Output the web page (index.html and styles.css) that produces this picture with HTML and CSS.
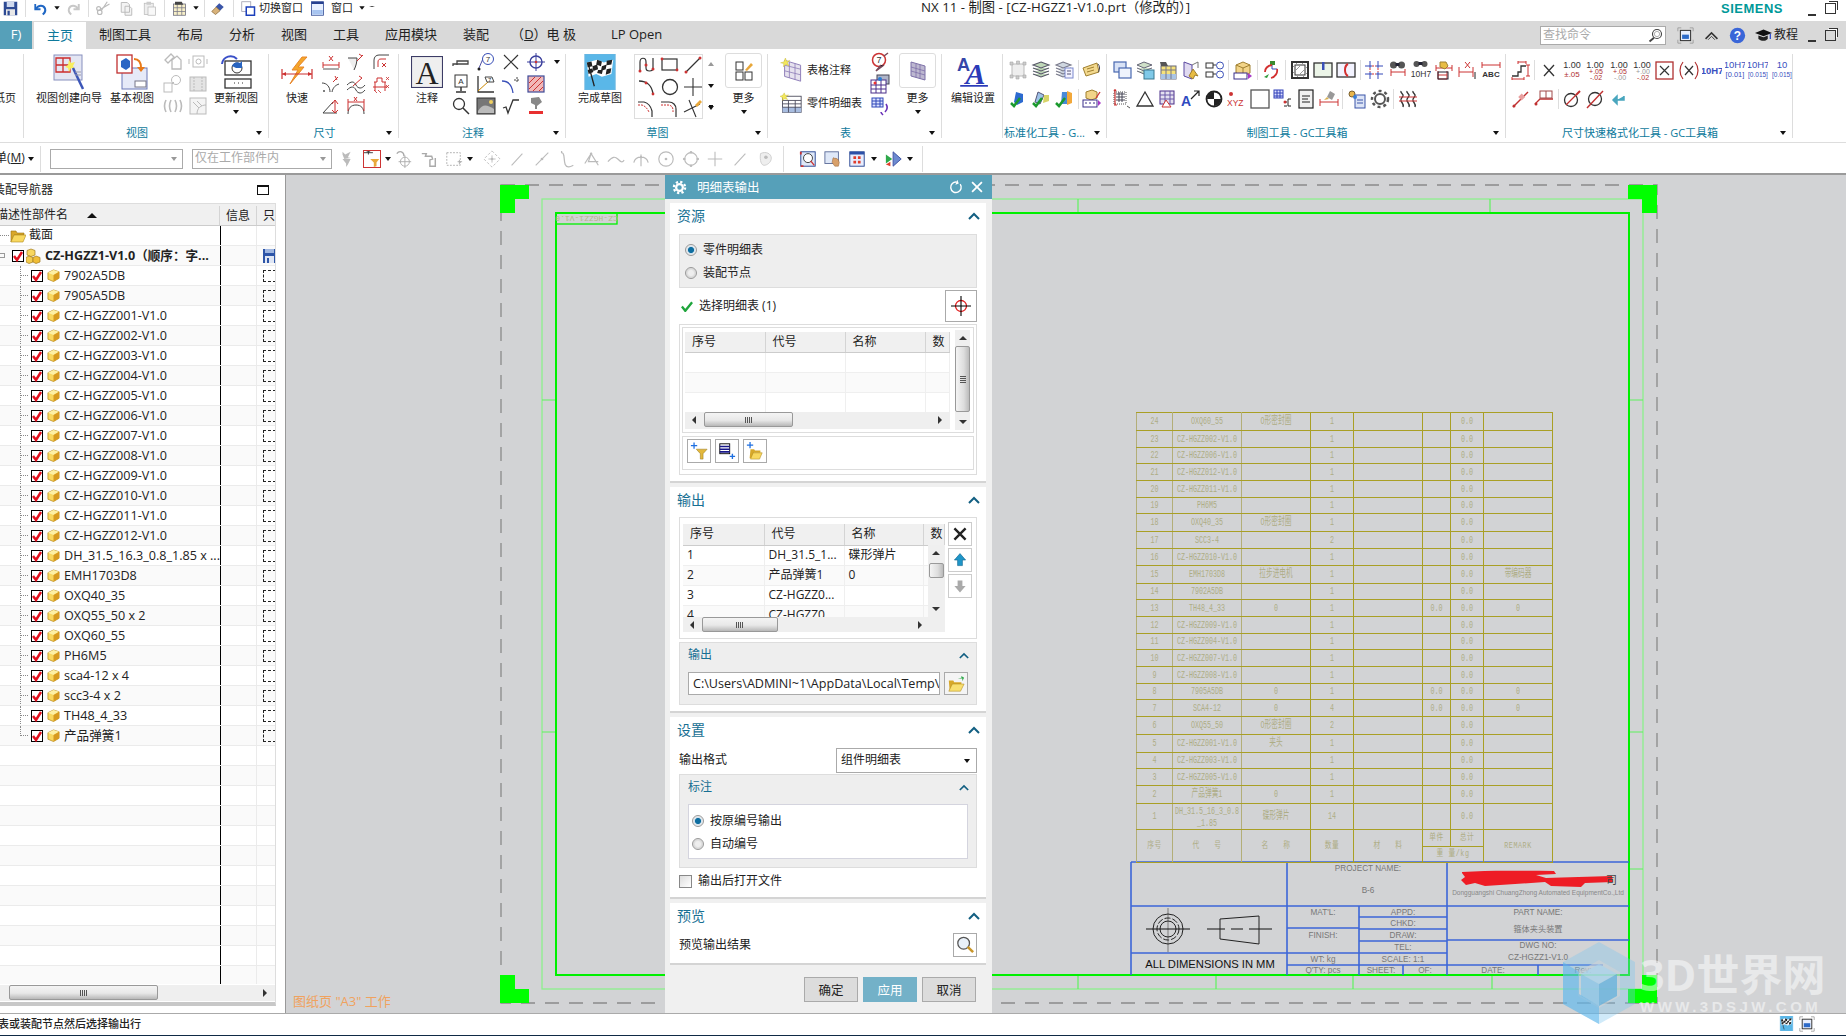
FILE: index.html
```html
<!DOCTYPE html>
<html lang="zh-CN">
<head>
<meta charset="utf-8">
<title>NX 11 - 制图</title>
<link rel="stylesheet" href="styles.css">
</head>
<body>
<svg class="defs" xmlns="http://www.w3.org/2000/svg">
<defs>
<symbol id="save" viewBox="0 0 20 20"><rect x="1" y="1" width="18" height="18" fill="#2d4a94"/><rect x="5" y="1" width="10" height="7" fill="#cfd9ee"/><rect x="4" y="11" width="12" height="8" fill="#e8e8e8"/><rect x="6" y="13" width="3" height="6" fill="#2d4a94"/></symbol>
<symbol id="undo" viewBox="0 0 20 20"><path d="M3 4v7h7" fill="none" stroke="#2067c4" stroke-width="2.4"/><path d="M3.5 11c4-6 10-6 12.500-1 1 3-.5 6-3 8" fill="none" stroke="#2067c4" stroke-width="2.8"/></symbol>
<symbol id="redo" viewBox="0 0 20 20"><path d="M17 4v7h-7M16.500 11c-4-6-10-6-12.500-1-1 3 .5 6 3 8" fill="none" stroke="#c8c8c8" stroke-width="2.600"/></symbol>
<symbol id="scis" viewBox="0 0 20 20"><path d="M15 1 7 13M18 4 6 11" stroke="#bbb" stroke-width="1.600"/><circle cx="5" cy="15" r="3" fill="none" stroke="#bbb" stroke-width="1.600"/><circle cx="3.500" cy="10" r="2.600" fill="none" stroke="#bbb" stroke-width="1.600"/></symbol>
<symbol id="copy" viewBox="0 0 20 20"><path d="M3 2h8l3 3v10H3z M8 7h6l3 3v9H8z" fill="#f3f3f3" stroke="#bbb" stroke-width="1.300"/></symbol>
<symbol id="paste" viewBox="0 0 20 20"><rect x="3" y="3" width="12" height="15" fill="#eee" stroke="#bbb"/><rect x="6" y="1" width="6" height="4" fill="#ccc"/><rect x="8" y="8" width="10" height="11" fill="#f8f8f8" stroke="#bbb"/></symbol>
<symbol id="qtbl" viewBox="0 0 20 20"><rect x="2" y="4" width="16" height="15" fill="#f7efc8" stroke="#667"/><path d="M2 9h16M2 14h16M7 4v15M13 4v15" stroke="#778"/><path d="M4 1h9l2 4H4z" fill="#444"/></symbol>
<symbol id="brush" viewBox="0 0 20 20"><path d="M11 3l6 5-5 5-6-5z" fill="#3a55a8"/><path d="M7 8 1 14l5 4 6-5z" fill="#d8b27a" stroke="#8a6a3a"/></symbol>
<symbol id="win1" viewBox="0 0 20 20"><rect x="1" y="1" width="12" height="13" fill="#fff" stroke="#99a"/><rect x="7" y="8" width="11" height="11" fill="#fff" stroke="#1b3fbb" stroke-width="2"/></symbol>
<symbol id="win2" viewBox="0 0 20 20"><rect x="2" y="1" width="16" height="18" fill="#e8f0ff" stroke="#26408f"/><rect x="2" y="1" width="16" height="3" fill="#26408f"/><rect x="3" y="12" width="14" height="6" fill="#a7c4f0"/></symbol>
<symbol id="wiz" viewBox="0 0 32 36"><rect x="1" y="1" width="28" height="25" fill="#e4e6f3" stroke="#8790be"/><path d="M3 4h14v14H3zM3 11h14M10 4v14" fill="none" stroke="#cb2d2d" stroke-width="1.300"/><path d="M16 6l2 3 4-1-2 4 2 3-4-1-2 4-1-4-3-1 3-2z" fill="#f7ee60"/><path d="M20 14l10 21" stroke="#3c56b8" stroke-width="2.500"/><path d="M22 18h6M22 21h6" stroke="#99a" fill="none"/></symbol>
<symbol id="base" viewBox="0 0 32 36"><rect x="6" y="14" width="25" height="21" fill="#e6eaf8" stroke="#6b78b8"/><rect x="19" y="27" width="11" height="6" fill="#fff" stroke="#778"/><rect x="1" y="1" width="15" height="18" fill="#fff" stroke="#c03030" stroke-width="1.300"/><path d="M5 7l5-3 4 3v6l-4 3-5-3z" fill="#2b66c4"/><path d="M18 5c5 0 7 3 7 9" fill="none" stroke="#e97a18" stroke-width="2"/><path d="M21 13h8l-4 5z" fill="#e97a18"/></symbol>
<symbol id="updv" viewBox="0 0 32 36"><rect x="5" y="7" width="26" height="14" fill="#fff" stroke="#333" stroke-width="1.300"/><rect x="5" y="25" width="26" height="9" fill="#fff" stroke="#333" stroke-width="1.300"/><path d="M14 29h1M18 29h1M22 29h1" stroke="#333"/><circle cx="17" cy="14" r="5" fill="none" stroke="#333"/><path d="M2 10c1-8 10-10 15-5" fill="none" stroke="#3a50c8" stroke-width="2"/><path d="M12 12c1-3 5-5 8-3l2-2v7h-6z" fill="#2864c0"/></symbol>
<symbol id="g1" viewBox="0 0 20 20"><path d="M2 8l6-6 3 3-6 6zM9 8l5-4 4 4v9H9z" fill="none" stroke="#bbb" stroke-width="1.300"/></symbol>
<symbol id="g2" viewBox="0 0 20 20"><rect x="5" y="4" width="11" height="11" fill="none" stroke="#bbb"/><path d="M1 7v5M19 7v5" stroke="#bbb"/><circle cx="10.500" cy="9.500" r="2.500" fill="none" stroke="#bbb"/></symbol>
<symbol id="g3" viewBox="0 0 20 20"><rect x="1" y="9" width="8" height="9" fill="none" stroke="#bbb"/><circle cx="13" cy="6" r="4.500" fill="none" stroke="#bbb"/><path d="M9 10l2-2" stroke="#bbb"/></symbol>
<symbol id="g4" viewBox="0 0 20 20"><rect x="2" y="3" width="16" height="14" fill="#e4e4e4" stroke="#bbb"/><path d="M6 3v14M14 3v14" stroke="#bbb" stroke-dasharray="2 1"/></symbol>
<symbol id="g5" viewBox="0 0 20 20"><path d="M3 4c-2 4-2 8 0 12M8 4c-2 4-2 8 0 12M12 4c2 4 2 8 0 12M17 4c2 4 2 8 0 12" fill="none" stroke="#bbb" stroke-width="1.600"/></symbol>
<symbol id="g6" viewBox="0 0 20 20"><rect x="2" y="2" width="16" height="16" fill="#f4f4f4" stroke="#bbb"/><path d="M9 18c0-6 4-9 9-9M5 6l6 6M9 5l5 5" fill="none" stroke="#bbb"/></symbol>
<symbol id="fast" viewBox="0 0 32 32"><path d="M21 1 11 14h6L9 28l14-17h-6l9-10z" fill="#f4a62a" stroke="#e8862a"/><path d="M1 18h30M1 13v10M31 13v10" stroke="#cc3030" stroke-width="1.200"/><path d="M1 18l4-2v4zM31 18l-4-2v4z" fill="#cc3030"/></symbol>
<symbol id="d1" viewBox="0 0 20 20"><path d="M2 13h16M2 10v6M18 10v6" stroke="#cc3030"/><path d="M2 17h16" stroke="#555"/><path d="M8 4l4 5M12 4 8 9" stroke="#cc3030"/></symbol>
<symbol id="d2" viewBox="0 0 20 20"><path d="M2 6h9c0 4-1 8-3 12" fill="#eee" stroke="#444"/><path d="M11 9l6-6M13 2l3 2" stroke="#cc3030"/></symbol>
<symbol id="d3" viewBox="0 0 20 20"><path d="M3 17V8c0-3 2-5 5-5h10" fill="none" stroke="#444"/><path d="M7 15V10c0-2 1-3 3-3h5" fill="none" stroke="#cc3030"/><path d="M11 11l4 4M15 11l-4 4" stroke="#cc3030"/></symbol>
<symbol id="d4" viewBox="0 0 20 20"><path d="M1 9c5 0 8 4 8 9M18 10c-3 1-6 3-7 8" fill="none" stroke="#444"/><path d="M12 8l5-5M14 2l2 4" stroke="#cc3030"/><path d="M2 17h2M3 16v2" stroke="#555"/></symbol>
<symbol id="d5" viewBox="0 0 20 20"><path d="M1 11c4-4 7-4 9 0s6 4 9 0M1 16c4-4 7-4 9 0s6 4 9 0" fill="none" stroke="#444"/><path d="M7 12 16 4M13 2l3 2" stroke="#cc3030"/></symbol>
<symbol id="d6" viewBox="0 0 20 20"><path d="M3 8h3V4h5v4h4M4 8v9M14 8v9M2 13h14" fill="none" stroke="#cc3030"/><path d="M15 3l3 3M18 3l-3 3M15 11l3 3M18 11l-3 3M3 16l3 3M7 16l3 3" stroke="#cc3030" stroke-width=".8"/></symbol>
<symbol id="d7" viewBox="0 0 20 20"><path d="M12 6 2 17h14" fill="none" stroke="#444"/><path d="M14 4v13M11 14l3 3 3-3M11 8l3-4 3 4" fill="none" stroke="#cc3030"/></symbol>
<symbol id="d8" viewBox="0 0 20 20"><path d="M2 18c0-6 3-9 8-9s8 3 8 9" fill="none" stroke="#444"/><path d="M2 6h16M2 3v12M18 3v12" stroke="#cc3030"/><path d="M8 1l3 4M11 1 8 5" stroke="#cc3030"/></symbol>
<symbol id="bigA" viewBox="0 0 30 30"><rect x=".5" y=".5" width="29" height="29" fill="#efefef" stroke="#3c3c66"/><text x="15" y="26" text-anchor="middle" class="serif" font-size="30" fill="#222">A</text></symbol>
<symbol id="n1" viewBox="0 0 20 20"><path d="M2 14v-2h15v-3H6v4" fill="none" stroke="#444" stroke-width="1.300"/></symbol>
<symbol id="n2" viewBox="0 0 20 20"><path d="M9 2 3 16" stroke="#5050a0"/><circle cx="12" cy="7" r="5.500" fill="#fff" stroke="#3a50b8"/><text x="12" y="10" text-anchor="middle" font-size="8" class="sans" fill="#333">7</text><circle cx="3" cy="17" r="1.500" fill="#222"/></symbol>
<symbol id="n3" viewBox="0 0 20 20"><path d="M3 3l14 14M17 3 3 17" stroke="#333" stroke-width="1.200"/></symbol>
<symbol id="n4" viewBox="0 0 20 20"><circle cx="10" cy="10" r="6" fill="none" stroke="#3a3f9c" stroke-width="1.400"/><path d="M10 1v18M1 10h18" stroke="#3a3f9c"/><circle cx="10" cy="10" r="1.300" fill="#c33"/></symbol>
<symbol id="n5" viewBox="0 0 20 20"><rect x="4" y="1" width="12" height="12" fill="#fff" stroke="#333"/><text x="10" y="10" text-anchor="middle" font-size="8" class="sans" fill="#333">A</text><path d="M10 13v4M5 18h10" stroke="#333" stroke-width="1.500"/></symbol>
<symbol id="n6" viewBox="0 0 20 20"><path d="M2 2v16h16" fill="none" stroke="#333" stroke-width="1.300"/><path d="M2 17 13 7" stroke="#cc8800"/><path d="M9 3h7l2 5H11z" fill="#fff" stroke="#444"/><text x="12" y="8" font-size="6" class="sans" fill="#333">7</text></symbol>
<symbol id="n7" viewBox="0 0 20 20"><path d="M1 7c6 0 10 4 11 12" fill="none" stroke="#3a50b8" stroke-width="1.300"/><path d="M13 6h6M16 3v6" stroke="#444" stroke-dasharray="2 1"/></symbol>
<symbol id="n8" viewBox="0 0 20 20"><rect x="2" y="2" width="16" height="16" fill="#f1b8b8" stroke="#3c4a98" stroke-width="1.200"/><path d="M3 9l6-6M3 15 15 3M7 17 17 7M13 17l4-4" stroke="#c33"/></symbol>
<symbol id="n9" viewBox="0 0 20 20"><circle cx="8" cy="8" r="5.500" fill="#fff" stroke="#333" stroke-width="1.300"/><path d="M12 12l6 6" stroke="#333" stroke-width="1.500"/></symbol>
<symbol id="n10" viewBox="0 0 20 20"><rect x="1" y="2" width="18" height="16" fill="#777" stroke="#333"/><path d="M2 15c5-8 9-6 16-2v4H2z" fill="#bbb"/><circle cx="15" cy="6" r="2" fill="#f0d060"/></symbol>
<symbol id="n11" viewBox="0 0 20 20"><path d="M2 12l3-1 2 6 5-13h6" fill="none" stroke="#333" stroke-width="1.300"/></symbol>
<symbol id="n12" viewBox="0 0 20 20"><path d="M3 18h14v-3H3z" fill="#e83030"/><path d="M10 13V8" stroke="#888" stroke-width="2"/><path d="M5 2l8-1 3 5-5 4-6-3z" fill="#888"/></symbol>
<symbol id="flag" viewBox="0 0 32 38"><rect width="32" height="38" fill="#5ab7e8"/><path d="M0 0h32v38H0z" fill="none" stroke="#6db6e0"/><path d="M2 9l11-3 7 3 10-3 -2 15-10 3-6-3-8 3z" fill="#fff"/><path d="M2 9l5-1 1 5-5 1zM13 6l5 2-1 5-5-2zM8 13l5-2 1 5-5 2zM18 13l5-2-1 5-5 2zM23 7l6-1-1 5-5 1zM3 17l5-2 1 4-5 2zM14 17l5 0-1 4-5-1zM23 16l5-1-1 5-5 2z" fill="#222"/><path d="M4 12l6 22" stroke="#222" stroke-width="1.400"/></symbol>
<symbol id="s1" viewBox="0 0 20 20"><path d="M3 17V7c0-5 6-5 6 0v6c0 4 7 4 7 0V3" fill="none" stroke="#333" stroke-width="1.200"/><circle cx="3" cy="16" r="1.500" fill="#c33"/><circle cx="16" cy="14" r="1.500" fill="#c33"/><circle cx="9" cy="10" r="1.500" fill="#c33"/></symbol>
<symbol id="s2" viewBox="0 0 20 20"><rect x="2" y="4" width="15" height="11" fill="none" stroke="#333" stroke-width="1.200"/><circle cx="2" cy="4" r="1.400" fill="#c33"/><circle cx="17" cy="15" r="1.400" fill="#c33"/></symbol>
<symbol id="s3" viewBox="0 0 20 20"><path d="M3 17 17 3" stroke="#333" stroke-width="1.200"/><circle cx="3" cy="17" r="1.500" fill="#c33"/><circle cx="17" cy="3" r="1.500" fill="#c33"/></symbol>
<symbol id="s4" viewBox="0 0 20 20"><path d="M2 4c8 0 13 5 14 13" fill="none" stroke="#333" stroke-width="1.300"/><circle cx="9" cy="6" r="1.400" fill="#c33"/><circle cx="16" cy="17" r="1.400" fill="#c33"/></symbol>
<symbol id="s5" viewBox="0 0 20 20"><circle cx="10" cy="10" r="7.500" fill="none" stroke="#333" stroke-width="1.300"/></symbol>
<symbol id="s6" viewBox="0 0 20 20"><path d="M10 1v18M1 10h18" stroke="#333" stroke-width="1.100"/></symbol>
<symbol id="s7" viewBox="0 0 20 20"><path d="M1 4h6c4 1 7 5 8 9v6" fill="none" stroke="#333" stroke-width="1.200"/><path d="M1 7h4c3 1 5 3 7 7" fill="none" stroke="#c33" stroke-dasharray="2 1"/></symbol>
<symbol id="s8" viewBox="0 0 20 20"><path d="M1 4h8c4 0 7 3 7 7v8" fill="none" stroke="#333" stroke-width="1.200"/><path d="M1 7h7c3 0 5 2 5 5v2" fill="none" stroke="#c33" stroke-dasharray="2 1"/></symbol>
<symbol id="s9" viewBox="0 0 20 20"><path d="M6 2l7 17M1 14 17 6" stroke="#333" stroke-width="1.100"/><path d="M12 7l5-5 2 2-5 5z" fill="#e8a73a"/></symbol>
<symbol id="mo1" viewBox="0 0 20 20"><rect x="2" y="1" width="7" height="8" fill="#fff" stroke="#333"/><rect x="2" y="11" width="7" height="8" fill="#fff" stroke="#333"/><rect x="11" y="11" width="7" height="8" fill="#fff" stroke="#333"/><path d="M11 9l6-7 2 2-6 6z" fill="#e8a73a"/></symbol>
<symbol id="tb1" viewBox="0 0 26 30"><path d="M5 3l20 6v20L5 23z" fill="#e6e2ee" stroke="#8d7cb8" stroke-width="1.200"/><path d="M5 9l20 5M5 16l20 5M11 5v20M18 7v20" stroke="#8d7cb8"/><path d="M6 0l1.500 4 4-1-3 3 2 4-4-2-3 3 .5-4L0 6l4-1z" fill="#f3e85c" stroke="#c0b030" stroke-width=".5"/></symbol>
<symbol id="tb2" viewBox="0 0 26 24"><rect x="3" y="4" width="22" height="19" fill="#fff" stroke="#445"/><rect x="3" y="17" width="22" height="6" fill="#a8bde0"/><path d="M3 9h22M3 13h22M3 17h22M10 9v14M18 9v14" stroke="#445"/><path d="M5 0l1.500 3 3.500-.5L7 5l2 3-3.500-1L3 9l-.3-3.500L0 4l3-1z" fill="#f3e85c" stroke="#c0b030" stroke-width=".4"/></symbol>
<symbol id="tb3" viewBox="0 0 20 20"><circle cx="9" cy="8" r="6.500" fill="#fff" stroke="#c33" stroke-width="1.500"/><text x="9" y="11" text-anchor="middle" font-size="9" class="sans" fill="#333">7</text><path d="M11 13 6 19l8-6M14 4l4-3" stroke="#7a4a5a" stroke-width="1.500"/></symbol>
<symbol id="tb4" viewBox="0 0 20 20"><rect x="7" y="1" width="12" height="9" fill="#aeb4c8" stroke="#445"/><rect x="1" y="6" width="15" height="13" fill="#fff" stroke="#4a2f8a"/><path d="M1 11h15M1 15h15M6 6v13M11 6v13" stroke="#4a2f8a"/><circle cx="5" cy="9" r="1.500" fill="#e33"/><circle cx="10" cy="5" r="2" fill="#2b7bd0"/></symbol>
<symbol id="tb5" viewBox="0 0 20 20"><rect x="2" y="2" width="11" height="9" fill="#dde4ff" stroke="#3048b8"/><path d="M2 5h11M2 8h11M6 2v9M10 2v9" stroke="#3048b8"/><path d="M16 8c2 3 1 6-1 8M13 19c-1-1-2-2-2-3" fill="none" stroke="#6a32b8" stroke-width="1.600"/></symbol>
<symbol id="tb6" viewBox="0 0 20 20"><path d="M3 1l14 4v14L3 15z" fill="#bdb8d0" stroke="#7d70a8"/><path d="M3 6l14 4M3 10l14 4M8 3v13M12 4v14" stroke="#7d70a8" stroke-width=".8"/></symbol>
<symbol id="edit" viewBox="0 0 30 30"><text x="0" y="14" class="sans" font-size="17" font-weight="700" fill="#3546a8">A</text><text x="8" y="26" class="serif" font-size="28" font-weight="700" font-style="italic" fill="#2b3ab8">A</text><path d="M3 28h26" stroke="#2b3ab8" stroke-width="1.600"/></symbol>
<symbol id="u1" viewBox="0 0 20 20"><rect x="4" y="4" width="12" height="12" fill="#eee" stroke="#bbb"/><path d="M2 2h3v3H2zM15 2h3v3h-3zM2 15h3v3H2zM15 15h3v3h-3zM8.500 1h3v3h-3zM8 16h3v3H8z" fill="#ccc" stroke="#aaa" stroke-width=".6"/></symbol>
<symbol id="u2" viewBox="0 0 20 20"><path d="M10 2l8 3-8 3-8-3zM2 8l8 3 8-3M2 11l8 3 8-3M2 14l8 3 8-3" fill="#bfd7b8" stroke="#556" stroke-width="1.100"/></symbol>
<symbol id="u3" viewBox="0 0 20 20"><path d="M9 2l8 3-8 3-7-3zM2 8l7 3 8-3M2 11l7 3 8-3M2 14l7 3 8-3" fill="#cfd7e0" stroke="#778" stroke-width="1.100"/><rect x="11" y="8" width="8" height="10" fill="#f2f2ff" stroke="#7a88cc"/><path d="M13 11h4M13 14h4" stroke="#557"/></symbol>
<symbol id="u4" viewBox="0 0 20 20"><path d="M1 8l14-5 2 9-13 4z" fill="#f3d98e" stroke="#a08030"/><path d="M5 9l7-2M5 12l7-2" stroke="#a08030"/><path d="M16 4c2 2 2 6 0 8" fill="none" stroke="#445"/></symbol>
<symbol id="u5" viewBox="0 0 20 20"><path d="M8 3l7 2v8l-6 3-3-3z" fill="#2d6ad0"/><path d="M3 14l3 3 6-8" fill="none" stroke="#1c9a2f" stroke-width="2.500"/></symbol>
<symbol id="u6" viewBox="0 0 20 20"><path d="M7 3l6 3-4 9-5-2z" fill="#9ec2e8" stroke="#557"/><path d="M13 6h5v6l-6 2z" fill="#d8d468"/><path d="M2 14l3 3 6-8" fill="none" stroke="#1c9a2f" stroke-width="2.500"/></symbol>
<symbol id="u7" viewBox="0 0 20 20"><path d="M8 3h5v12H7z" fill="#4a8ad8"/><path d="M13 2l5 2v10l-5 2z" fill="#f2a83a"/><path d="M2 14l3 3 6-8" fill="none" stroke="#1c9a2f" stroke-width="2.500"/></symbol>
<symbol id="u8" viewBox="0 0 20 20"><path d="M4 3l6-2 5 2v6l-6 2-5-2z" fill="#f2d488" stroke="#a08030"/><rect x="1" y="11" width="14" height="7" fill="#fff" stroke="#3a2f8a"/><path d="M3 14h2M7 14h2M11 14h2" stroke="#3a2f8a"/><path d="M16 11l3 3-3 3z" fill="#a838c8"/><path d="M14 9l4-6" stroke="#c33" stroke-width="1.300"/></symbol>
<symbol id="t1" viewBox="0 0 20 20"><rect x="2" y="2" width="12" height="10" fill="#d8e2f6" stroke="#4868b0" stroke-width="1.200"/><rect x="7" y="8" width="12" height="10" fill="#eef3fc" stroke="#4868b0" stroke-width="1.200"/></symbol>
<symbol id="t2" viewBox="0 0 20 20"><path d="M9 2l8 3-8 3-7-3zM2 8l7 3 8-3M2 11l7 3 8-3" fill="#cfe0c8" stroke="#667"/><rect x="9" y="10" width="10" height="9" fill="#7fc9e8" stroke="#3a7890"/></symbol>
<symbol id="t3" viewBox="0 0 20 20"><rect x="3" y="6" width="15" height="13" fill="#f6e27a" stroke="#667"/><rect x="3" y="14" width="15" height="5" fill="#aac4e4"/><path d="M3 10h15M8 6v13M13 6v13" stroke="#778"/><path d="M2 2h6l2 4H3z" fill="#555"/></symbol>
<symbol id="t4" viewBox="0 0 20 20"><path d="M3 2l8 3v14l-8-3z" fill="#e0daf0" stroke="#5a48a0"/><path d="M11 5l6-3v6" fill="none" stroke="#777"/><path d="M8 16l4-7 5 7-3-1-2 4z" fill="#e8bc44" stroke="#a08030"/></symbol>
<symbol id="t5" viewBox="0 0 20 20"><rect x="1" y="3" width="7" height="5" fill="none" stroke="#333"/><rect x="1" y="12" width="7" height="5" fill="none" stroke="#333"/><circle cx="15" cy="5.500" r="3.500" fill="#fff" stroke="#3a50b8"/><circle cx="15" cy="14.500" r="3.500" fill="#fff" stroke="#3a50b8"/><path d="M8 5h3M8 14h3" stroke="#333"/></symbol>
<symbol id="t6" viewBox="0 0 20 20"><path d="M3 5l7-3 7 3v8l-7 3-7-3z" fill="#f2d488" stroke="#a08030"/><path d="M3 5l7 3 7-3M10 8v8" fill="none" stroke="#a08030"/><rect x="1" y="13" width="13" height="6" fill="#fff" stroke="#3a2f8a"/><path d="M15 13l4 3-4 3z" fill="#a838c8"/></symbol>
<symbol id="t7" viewBox="0 0 20 20"><path d="M11 4v5h5" fill="none" stroke="#3448b8"/><rect x="9" y="1" width="5" height="4" fill="#3a8a30"/><path d="M4 12c0-4 2-6 7-7M16 9c1 4-2 8-6 9" fill="none" stroke="#d33030" stroke-width="1.800"/><path d="M3 17l5-3-2 4z" fill="#2c9a3a"/></symbol>
<symbol id="t8" viewBox="0 0 20 20"><rect x="2" y="2" width="16" height="16" fill="#fff" stroke="#333" stroke-width="2"/><rect x="5" y="5" width="10" height="10" fill="#fff" stroke="#333"/><path d="M3 7l4-4M3 13 13 3M7 17 17 7M13 17l4-4" stroke="#999"/></symbol>
<symbol id="t9" viewBox="0 0 20 20"><rect x="1" y="3" width="18" height="14" fill="#ecf5e8" stroke="#333" stroke-width="1.300"/><rect x="9" y="2" width="2.500" height="8" fill="#3a50b8"/></symbol>
<symbol id="t10" viewBox="0 0 20 20"><rect x="1" y="3" width="18" height="14" fill="#f3f3ff" stroke="#333" stroke-width="1.300"/><path d="M12 4c-4 2-4 10 0 12" fill="none" stroke="#d33030" stroke-width="2"/></symbol>
<symbol id="t11" viewBox="0 0 20 20"><path d="M1 6h7M12 6h7M1 14h7M12 14h7M6 1v7M14 1v7M6 12v7M14 12v7" stroke="#3448b8"/><path d="M8 6h4M8 14h4M6 8v4M14 8v4" stroke="#c33" stroke-dasharray="2 1"/></symbol>
<symbol id="t12" viewBox="0 0 20 20"><circle cx="5.500" cy="5" r="3.500" fill="#555"/><circle cx="13.500" cy="5" r="3.500" fill="#555"/><rect x="7.500" y="3" width="4" height="3" fill="#223"/><path d="M3 12h14M3 9v7M17 9v7" stroke="#c33"/></symbol>
<symbol id="t13" viewBox="0 0 20 20"><circle cx="5.500" cy="4" r="3" fill="#555"/><circle cx="13.500" cy="4" r="3" fill="#555"/><rect x="7.500" y="2" width="4" height="3" fill="#223"/><text x="10" y="17" text-anchor="middle" font-size="8.500" class="sans" fill="#333">10H7</text></symbol>
<symbol id="t14" viewBox="0 0 20 20"><path d="M2 8h16M2 5v6M18 5v6M4 11v8h9v-8M4 15h9" fill="none" stroke="#c33"/><rect x="4" y="12" width="10" height="7" fill="none" stroke="#223"/><path d="M6 2h6l2 4-3 3-5-2z" fill="#e8bc44" stroke="#a08030"/></symbol>
<symbol id="t15" viewBox="0 0 20 20"><path d="M1 12h14M1 7v10M15 7v10" stroke="#c33"/><path d="M7 2l5 6M12 2 7 8" stroke="#c33"/><path d="M17 12v7" stroke="#222"/></symbol>
<symbol id="t16" viewBox="0 0 20 20"><path d="M1 5h18M1 2v6M19 2v6" stroke="#c33"/><text x="10" y="17" text-anchor="middle" font-size="8" class="sans" font-weight="700" fill="#333">ABC</text></symbol>
<symbol id="w1" viewBox="0 0 20 20"><path d="M2 3h12v12H2z" fill="#fff" stroke="#555" stroke-dasharray="1 1"/><path d="M4 5h9M4 8h9M4 11h9M7 3v10M10 3v10" stroke="#445"/><circle cx="3" cy="1.500" r="1.300" fill="#c33"/><path d="M3 3v13M2 16h3" stroke="#c33" stroke-width="1.200"/><path d="M15 17l3 2" stroke="#555"/></symbol>
<symbol id="w2" viewBox="0 0 20 20"><path d="M10 3 2 17h16z" fill="#fff" stroke="#333" stroke-width="1.300"/></symbol>
<symbol id="w3" viewBox="0 0 20 20"><rect x="2" y="2" width="14" height="13" fill="#e4e0f0" stroke="#4a2f8a"/><path d="M2 6h14M2 10h14M7 2v13M12 2v13" stroke="#6a58a8"/><path d="M8 11l5 7h-9z" fill="#fff" stroke="#c33"/></symbol>
<symbol id="w4" viewBox="0 0 20 20"><text x="0" y="17" font-size="14" class="sans" font-weight="700" fill="#2f4ac0">A</text><path d="M10 10l8-8M13 2h5v5" fill="none" stroke="#222" stroke-width="1.200"/></symbol>
<symbol id="w5" viewBox="0 0 20 20"><circle cx="10" cy="10" r="7.500" fill="#fff" stroke="#222" stroke-width="1.800"/><path d="M10 3a7 7 0 0 0 -7 7h7zM10 17a7 7 0 0 0 7-7h-7z" fill="#222"/></symbol>
<symbol id="w6" viewBox="0 0 20 20"><circle cx="4" cy="5" r="2" fill="#c33"/><text x="0" y="17" font-size="8.500" class="sans" fill="#c33">XYZ</text></symbol>
<symbol id="w7" viewBox="0 0 20 20"><rect x="1" y="1" width="18" height="18" fill="#fff" stroke="#555" stroke-width="1.300"/></symbol>
<symbol id="w8" viewBox="0 0 20 20"><rect x="1" y="1" width="9" height="8" fill="#dde0ff" stroke="#3040b8"/><path d="M1 4h9M1 7h9M4 1v8M7 1v8" stroke="#3040b8"/><path d="M18 10h-3v7h3M11 13h3M11 17h3" fill="none" stroke="#222"/><circle cx="12" cy="13" r="1.500" fill="#c33"/></symbol>
<symbol id="w9" viewBox="0 0 20 20"><rect x="3" y="1" width="14" height="18" fill="#f1f1f1" stroke="#222" stroke-width="1.200"/><path d="M6 7h8M6 10h6M6 13h8" stroke="#222"/></symbol>
<symbol id="w10" viewBox="0 0 20 20"><path d="M1 13h18M1 10v7M19 10v7" stroke="#c33"/><path d="M11 2l5 3-3 6-5-3z" fill="#999"/><path d="M5 11l3-3 2 2z" fill="#d8b050"/></symbol>
<symbol id="w11" viewBox="0 0 20 20"><circle cx="5" cy="5" r="3" fill="#e8b64c" stroke="#7a6030"/><rect x="8" y="6" width="10" height="13" fill="#dce4f6" stroke="#3a55a8"/><path d="M10 11h6M10 14h6" stroke="#3a55a8"/><circle cx="8" cy="8" r="2" fill="#3a80d8"/></symbol>
<symbol id="gear" viewBox="0 0 20 20"><circle cx="10" cy="10" r="5" fill="none" stroke="#555" stroke-width="2"/><circle cx="10" cy="10" r="8" fill="none" stroke="#555" stroke-width="2.500" stroke-dasharray="3 3"/></symbol>
<symbol id="w13" viewBox="0 0 20 20"><path d="M3 2c-1 2 3 3 2 5s-3 3-2 5 3 3 2 6M9 2c-1 2 3 3 2 5s-3 3-2 5 3 3 2 6M15 2c-1 2 3 3 2 5s-3 3-2 5 3 3 2 6" fill="none" stroke="#333" stroke-width="1.400"/><path d="M1 8h18M1 12h18" stroke="#c33"/></symbol>
<symbol id="f1" viewBox="0 0 20 20"><path d="M1 16h6v-4h3V6h5" fill="none" stroke="#333" stroke-width="1.300"/><path d="M1 19h12M1 17v3M13 17v3M17 5v11M15 5h4M15 16h4M7 2h8M7 1v3M15 1v3" stroke="#c33"/></symbol>
<symbol id="f2" viewBox="0 0 20 20"><path d="M5 5l10 11M15 5 5 16" stroke="#333" stroke-width="1.300"/></symbol>
<symbol id="f3" viewBox="0 0 20 20"><text x="10" y="8" text-anchor="middle" font-size="9" class="sans" fill="#333">1.00</text><text x="10" y="17" text-anchor="middle" font-size="8" class="sans" fill="#b03030">±.05</text></symbol>
<symbol id="f4" viewBox="0 0 20 20"><text x="10" y="8" text-anchor="middle" font-size="9" class="sans" fill="#333">1.00</text><text x="11" y="13.500" text-anchor="middle" font-size="7" class="sans" fill="#b03030">+.05</text><text x="11" y="19.500" text-anchor="middle" font-size="7" class="sans" fill="#b03030">-.02</text></symbol>
<symbol id="f5" viewBox="0 0 20 20"><text x="10" y="8" text-anchor="middle" font-size="9" class="sans" fill="#333">1.00</text><text x="11" y="13.500" text-anchor="middle" font-size="7" class="sans" fill="#b03030">+.05</text><text x="11" y="19.500" text-anchor="middle" font-size="7" class="sans" fill="#999">-.00</text></symbol>
<symbol id="f6" viewBox="0 0 20 20"><text x="10" y="8" text-anchor="middle" font-size="9" class="sans" fill="#333">1.00</text><text x="11" y="13.500" text-anchor="middle" font-size="7" class="sans" fill="#999">+.00</text><text x="11" y="19.500" text-anchor="middle" font-size="7" class="sans" fill="#b03030">-.02</text></symbol>
<symbol id="f7" viewBox="0 0 20 20"><rect x="1" y="2" width="17" height="17" fill="#fff" stroke="#b03030" stroke-width="1.300"/><path d="M5 6l9 9M14 6l-9 9" stroke="#333" stroke-width="1.200"/></symbol>
<symbol id="f8" viewBox="0 0 20 20"><path d="M4 2c-4 5-4 12 0 17M16 2c4 5 4 12 0 17" fill="none" stroke="#b03030" stroke-width="1.200"/><path d="M6 6l8 9M14 6l-8 9" stroke="#333" stroke-width="1.200"/></symbol>
<symbol id="f9" viewBox="0 0 20 20"><text x="10" y="14" text-anchor="middle" font-size="9.500" class="sans" font-weight="700" fill="#3a50c0">10H7</text></symbol>
<symbol id="f10" viewBox="0 0 20 20"><text x="10" y="8" text-anchor="middle" font-size="9.500" class="sans" fill="#3a50c0">10H7</text><text x="10" y="17" text-anchor="middle" font-size="7.500" class="sans" fill="#3a50c0">[0.01]</text></symbol>
<symbol id="f11" viewBox="0 0 20 20"><text x="10" y="8" text-anchor="middle" font-size="9.500" class="sans" fill="#3a50c0">10H7</text><text x="10" y="17" text-anchor="middle" font-size="6.500" class="sans" fill="#3a50c0">[0.015]</text></symbol>
<symbol id="f12" viewBox="0 0 20 20"><text x="10" y="8" text-anchor="middle" font-size="9.500" class="sans" fill="#3a50c0">10</text><text x="10" y="17" text-anchor="middle" font-size="6.500" class="sans" fill="#3a50c0">[0.015]</text></symbol>
<symbol id="h1" viewBox="0 0 20 20"><path d="M2 18 17 3" stroke="#c03030" stroke-width="1.500"/><path d="M8 5h5v5H8z" fill="#e8a0a0" transform="rotate(45 10 8)"/><circle cx="3" cy="17" r="1.500" fill="#c03030"/></symbol>
<symbol id="h2" viewBox="0 0 20 20"><path d="M1 15l5-5h13" fill="none" stroke="#c03030" stroke-width="1.300"/><rect x="6" y="2" width="12" height="7" fill="#fff" stroke="#a04a4a"/><path d="M12 2v7" stroke="#a04a4a"/><circle cx="2" cy="15" r="1.500" fill="#c03030"/></symbol>
<symbol id="h3" viewBox="0 0 20 20"><circle cx="9" cy="11" r="6.500" fill="#fff" stroke="#333" stroke-width="1.300"/><path d="M4 16 14 6" stroke="#c03030" stroke-width="1.300"/><path d="M14 6l4-4" stroke="#c03030" stroke-width="2"/></symbol>
<symbol id="h4" viewBox="0 0 20 20"><circle cx="10" cy="10" r="6.500" fill="#fff" stroke="#333" stroke-width="1.300"/><path d="M2 19 18 2" stroke="#c03030" stroke-width="1.400"/></symbol>
<symbol id="h5" viewBox="0 0 20 20"><path d="M15 7v4H8M8 7l-4 4 4 4z" fill="#4aa6be" stroke="#4aa6be" stroke-width="1.500"/></symbol>
<symbol id="b1" viewBox="0 0 20 20"><path d="M5 2 8 5 14 2 11 8 14 9 7 10 5 5zM5 10l4 5v4l2-3 3-6z" fill="#bbb"/></symbol>
<symbol id="b2" viewBox="0 0 20 20"><path d="M4 2h4M6 0v5M1 3h10" stroke="#333" stroke-width="1"/><path d="M8 10h10l-3 4v4l-3 1v-5z" fill="#e8a93a"/></symbol>
<symbol id="b3" viewBox="0 0 20 20"><path d="M2 4c3-4 8-2 8 3" fill="none" stroke="#aaa" stroke-width="1.500"/><circle cx="11" cy="13" r="5" fill="none" stroke="#aaa"/><path d="M11 6v14M4 13h14" stroke="#aaa"/></symbol>
<symbol id="b4" viewBox="0 0 20 20"><path d="M2 4h5l-1 3h7l1 3-3 1v7h6V9" fill="none" stroke="#aaa" stroke-width="1.600"/></symbol>
<symbol id="b5" viewBox="0 0 20 20"><rect x="2" y="3" width="15" height="14" fill="none" stroke="#aaa" stroke-dasharray="2 1.500"/><path d="M14 13h5M16 11v5" stroke="#aaa"/></symbol>
<symbol id="b6" viewBox="0 0 20 20"><path d="M10 1l9 9-9 9-9-9z" fill="none" stroke="#bbb" stroke-dasharray="3 2"/><circle cx="10" cy="10" r="1.500" fill="#bbb"/><path d="M6 10h8M10 6v8" stroke="#bbb"/></symbol>
<symbol id="b7" viewBox="0 0 20 20"><path d="M4 17 16 4" stroke="#bbb" stroke-width="1.200"/></symbol>
<symbol id="b8" viewBox="0 0 20 20"><path d="M3 17 17 3" stroke="#bbb" stroke-width="1.200"/><circle cx="10" cy="10" r="1.500" fill="#bbb"/></symbol>
<symbol id="b9" viewBox="0 0 20 20"><path d="M4 1v2c4 0 2 8 4 13s7 2 9 1" fill="none" stroke="#bbb" stroke-width="1.400"/></symbol>
<symbol id="b10" viewBox="0 0 20 20"><path d="M2 15 9 4l8 13M9 4l-3 9 11 0" fill="none" stroke="#bbb" stroke-width="1.300"/><circle cx="9" cy="4" r="1.300" fill="#bbb"/></symbol>
<symbol id="b11" viewBox="0 0 20 20"><path d="M1 13c5-6 8-6 11-3s5 5 7 1" fill="none" stroke="#bbb" stroke-width="1.300"/></symbol>
<symbol id="b12" viewBox="0 0 20 20"><path d="M2 14c2-8 14-8 16 0M10 5v13" fill="none" stroke="#bbb" stroke-width="1.300"/><circle cx="10" cy="8" r="1.300" fill="#bbb"/></symbol>
<symbol id="b13" viewBox="0 0 20 20"><circle cx="10" cy="10" r="8" fill="none" stroke="#bbb" stroke-width="1.300"/><circle cx="10" cy="10" r="1.500" fill="#bbb"/></symbol>
<symbol id="b14" viewBox="0 0 20 20"><circle cx="10" cy="10" r="7" fill="none" stroke="#bbb" stroke-width="1.300"/><circle cx="10" cy="2.500" r="1.500" fill="#bbb"/><circle cx="10" cy="17.500" r="1.500" fill="#bbb"/><circle cx="2.500" cy="10" r="1.500" fill="#bbb"/><circle cx="17.500" cy="10" r="1.500" fill="#bbb"/></symbol>
<symbol id="b15" viewBox="0 0 20 20"><path d="M10 2v16M2 10h16" stroke="#bbb" stroke-width="1.200"/></symbol>
<symbol id="b16" viewBox="0 0 20 20"><path d="M5 4c6-3 12 0 12 5s-5 8-8 8-5-5-4-13z" fill="#eee" stroke="#ccc"/><circle cx="11" cy="8" r="2" fill="#bbb"/></symbol>
<symbol id="v1" viewBox="0 0 20 20"><rect x="2" y="2" width="16" height="16" fill="#dfe8f8" stroke="#1f3f8f"/><path d="M2 2v3M2 18h3" stroke="#c33" stroke-width="2"/><circle cx="10" cy="9" r="5" fill="#fff" stroke="#333"/><path d="M13 12l4 5" stroke="#c33" stroke-width="1.500"/></symbol>
<symbol id="v2" viewBox="0 0 20 20"><rect x="1" y="2" width="15" height="13" fill="#dfe8f8" stroke="#5a6a98"/><path d="M10 9c1-1 2 0 2 1l1-1 2 1 1 1 1 3-1 4-4 0-3-4z" fill="#d8a06a" stroke="#8a5a30" stroke-width=".5"/></symbol>
<symbol id="v3" viewBox="0 0 20 20"><rect x="2" y="2" width="16" height="16" fill="#e8eeff" stroke="#1f3f8f"/><rect x="2" y="2" width="16" height="3" fill="#2c50a8"/><path d="M6 7h3v3H6zM11 7h3v3h-3zM6 12h3v3H6zM11 12h3v3h-3z" fill="#e03c2c"/></symbol>
<symbol id="v4" viewBox="0 0 20 20"><path d="M9 2l9 8-9 8z" fill="#6d8ad0" stroke="#3a4ea0"/><path d="M1 5l7 5-7 5z" fill="#2ea84a"/><path d="M1 16l5-3v5z" fill="#e03c2c"/></symbol>
<symbol id="chk" viewBox="0 0 12 12"><rect x=".5" y=".5" width="11" height="11" fill="#fff" stroke="#000"/><path d="M2 6l3 4 5-8" fill="none" stroke="#e2101e" stroke-width="2.500"/></symbol>
<symbol id="cube" viewBox="0 0 14 14"><path d="M1 4l6-3 6 2v7l-6 3.500L1 11z" fill="#f8d75e" stroke="#b98a1c" stroke-width=".8"/><path d="M1 4l6 2.500L13 3 7 1z" fill="#fdf0a4"/><path d="M7 6.500v7L13 10V3z" fill="#d79a1e"/></symbol>
<symbol id="cubes" viewBox="0 0 16 16"><path d="M5 1l4 1.500V7L5 8.500 1 7V2.500z" fill="#f8d75e" stroke="#a07a1c" stroke-width=".7"/><path d="M3 8l4 1.500V14l-4 1.500L0 14V9.500z" fill="#f3cc4e" stroke="#a07a1c" stroke-width=".7"/><path d="M10 8l4 1.500V14l-4 1.500-3-1.500V9.500z" fill="#f0bd36" stroke="#a07a1c" stroke-width=".7"/></symbol>
<symbol id="folder" viewBox="0 0 16 14"><path d="M1 2h5l1 2h7v2H4L1 13z" fill="#d9a72a" stroke="#9a7414" stroke-width=".6"/><path d="M4 6h12l-3 7H1z" fill="#f8d860" stroke="#b08a1c" stroke-width=".6"/></symbol>
<symbol id="rsave" viewBox="0 0 14 14"><rect width="14" height="14" fill="#2d55a8"/><rect x="2" width="9" height="4" fill="#9fb6e0"/><rect x="2" y="7" width="9" height="7" fill="#dfe6f4"/><rect x="4" y="9" width="2" height="5" fill="#2d55a8"/></symbol>
<symbol id="cross" viewBox="0 0 20 20"><circle cx="10" cy="10" r="5.500" fill="none" stroke="#e01e1e" stroke-width="1.300"/><path d="M10 0v20M0 10h20" stroke="#000" stroke-width="1.100"/></symbol>
<symbol id="mag" viewBox="0 0 20 20"><circle cx="8.500" cy="8" r="6.500" fill="#e9f1fa" stroke="#555" stroke-width="1.400"/><path d="M13 12l6 6" stroke="#c9962a" stroke-width="2.800"/></symbol>
<symbol id="addf" viewBox="0 0 20 20"><path d="M1 4h7M4.500 .5v7" stroke="#1e6fe0" stroke-width="1.400"/><path d="M7 8h12l-4.500 5v6h-3v-6z" fill="#e3b83c" stroke="#9a7a20" stroke-width=".6"/></symbol>
<symbol id="addr" viewBox="0 0 20 20"><rect x="2" y="2" width="11" height="11" fill="#fff" stroke="#000"/><path d="M2 5h11M2 8h11M2 11h11" stroke="#17178a" stroke-width="1.800"/><path d="M13 16h6M16 13v6" stroke="#1e6fe0" stroke-width="1.500"/></symbol>
<symbol id="addo" viewBox="0 0 20 20"><path d="M1 3.500h7M4.500 0v7" stroke="#1e6fe0" stroke-width="1.400"/><path d="M5 8h4l1 1.500h6V12H9l-2 6H4z" fill="#d7a82a"/><path d="M8 12h10l-3 7H5z" fill="#f8d860" stroke="#b08a1c" stroke-width=".6"/></symbol>
<symbol id="openf" viewBox="0 0 20 20"><path d="M2 6h5l1 2h8v3H6L3 18z" fill="#d7a82a"/><path d="M6 10h13l-4 8H2z" fill="#f8df70" stroke="#b08a1c" stroke-width=".6"/><path d="M12 4h5v3l2-4-3-2v2z" fill="#2ea84a"/></symbol>
<symbol id="xb" viewBox="0 0 20 20"><path d="M3 3l14 14M17 3 3 17" stroke="#222" stroke-width="3"/></symbol>
<symbol id="up" viewBox="0 0 20 20"><path d="M10 2l7 8h-4v7H7v-7H3z" fill="#1f95c8" stroke="#136a92" stroke-width=".8"/></symbol>
<symbol id="down" viewBox="0 0 20 20"><path d="M10 18l7-8h-4V3H7v7H3z" fill="#aaa"/></symbol>
<symbol id="tgear" viewBox="0 0 20 20"><circle cx="10" cy="10" r="4.500" fill="none" stroke="#fff" stroke-width="3"/><circle cx="10" cy="10" r="7.500" fill="none" stroke="#fff" stroke-width="3" stroke-dasharray="3 2.900"/></symbol>
<symbol id="reset" viewBox="0 0 20 20"><path d="M16 6a7.500 7.500 0 1 1-5-3" fill="none" stroke="#fff" stroke-width="2"/><path d="M13 0v6H8z" fill="#fff" transform="rotate(-20 11 3)"/></symbol>
<symbol id="tclose" viewBox="0 0 20 20"><path d="M3 3l14 14M17 3 3 17" stroke="#fff" stroke-width="2.500"/></symbol>
<symbol id="chev" viewBox="0 0 12 8"><path d="M1 7l5-5 5 5" fill="none" stroke="#125f82" stroke-width="2"/></symbol>
<symbol id="okc" viewBox="0 0 14 12"><path d="M1 6l4 5 8-10" fill="none" stroke="#1fa53c" stroke-width="2.800"/></symbol>
<symbol id="frame" viewBox="0 0 20 20"><path d="M1 5V1h4M15 1h4v4M1 15v4h4M15 19h4v-4" fill="none" stroke="#999"/><rect x="4" y="4" width="12" height="12" fill="#e8eefc" stroke="#333" stroke-width="1.200"/><rect x="6" y="9" width="8" height="5" fill="#2c6ac8"/></symbol>
<symbol id="help" viewBox="0 0 20 20"><circle cx="10" cy="10" r="9" fill="#3a66d8"/><text x="10" y="15" text-anchor="middle" font-size="14" font-weight="700" class="sans" fill="#fff">?</text></symbol>
<symbol id="hat" viewBox="0 0 20 20"><path d="M0 7l10-4 10 4-10 4z" fill="#111"/><path d="M4 10v4c4 3 8 3 11 0v-4l-5 2z" fill="#222"/><path d="M18 8v6" stroke="#2040d0" stroke-width="1.400"/></symbol>
<symbol id="search" viewBox="0 0 20 20"><circle cx="12" cy="8" r="6" fill="#fff" stroke="#444" stroke-width="1.500"/><circle cx="12" cy="8" r="3.500" fill="none" stroke="#999"/><path d="M8 13l-6 5" stroke="#444" stroke-width="2.500"/></symbol>
<symbol id="upc" viewBox="0 0 20 20"><path d="M3 14l7-7 7 7" fill="none" stroke="#333" stroke-width="1.800"/><path d="M6 15l4-4 4 4" fill="none" stroke="#333" stroke-width="1"/></symbol>
</defs>
</svg>

<div class="app">
  <header class="titlebar">
    <svg class="q"><use href="#save"/></svg><i class="qs"></i>
    <svg class="q"><use href="#undo"/></svg><i class="cr q-cr"></i>
    <svg class="q"><use href="#redo"/></svg><i class="qs"></i>
    <svg class="q"><use href="#scis"/></svg><svg class="q"><use href="#copy"/></svg><svg class="q"><use href="#paste"/></svg><i class="qs"></i>
    <svg class="q"><use href="#qtbl"/></svg><i class="cr q-cr q-c0"></i><i class="qs qs-t"></i>
    <svg class="q"><use href="#brush"/></svg><i class="qs"></i>
    <svg class="q"><use href="#win1"/></svg><span class="qt">切换窗口</span>
    <svg class="q q2"><use href="#win2"/></svg><span class="qt qt2">窗口</span><i class="cr q-cr"></i><i class="cr q-cr2"></i>
    <span class="apptitle">NX 11 - 制图 - [CZ-HGZZ1-V1.0.prt（修改的）]</span>
    <span class="siemens">SIEMENS</span>
    <i class="wmin"></i><i class="wres"></i>
  </header>

  <nav class="tabs">
    <span class="tab file">F)</span>
    <span class="tab active">主页</span>
    <span class="tab">制图工具</span>
    <span class="tab">布局</span>
    <span class="tab">分析</span>
    <span class="tab">视图</span>
    <span class="tab">工具</span>
    <span class="tab">应用模块</span>
    <span class="tab">装配</span>
    <span class="tab tab-d">（<u>D</u>）电 极</span>
    <span class="tab">LP Open</span>
    <div class="tabs-r">
      <div class="find"><span>查找命令</span><svg><use href="#search"/></svg></div>
      <svg class="tr-i tr-f"><use href="#frame"/></svg>
      <svg class="tr-i"><use href="#upc"/></svg>
      <svg class="tr-i"><use href="#help"/></svg>
      <svg class="tr-i"><use href="#hat"/></svg>
      <span class="learn">教程</span>
      <i class="wmin"></i><i class="wres"></i>
    </div>
  </nav>

  <section class="ribbon">
    <div class="grp g0"><div class="gbody"><div class="cut">纸页</div></div></div>

    <div class="grp g-view">
      <div class="gbody">
        <div class="big w66 ml12"><svg class="bi"><use href="#wiz"/></svg><span>视图创建向导</span></div>
        <div class="big w44 ml8"><svg class="bi"><use href="#base"/></svg><span>基本视图</span></div>
        <div class="sg cols2 ml6">
          <svg class="c"><use href="#g1"/></svg><svg class="c"><use href="#g2"/></svg>
          <svg class="c"><use href="#g3"/></svg><svg class="c"><use href="#g4"/></svg>
          <svg class="c"><use href="#g5"/></svg><svg class="c"><use href="#g6"/></svg>
        </div>
        <div class="big w44 ml4"><svg class="bi"><use href="#updv"/></svg><span>更新视图</span><i class="cr bc"></i></div>
      </div>
      <div class="glabel"><span>视图</span><i class="cr"></i></div>
    </div>

    <div class="grp g-dim">
      <div class="gbody">
        <div class="big w42 ml7"><svg class="bi"><use href="#fast"/></svg><span>快速</span></div>
        <div class="sg cols3">
          <svg class="c"><use href="#d1"/></svg><svg class="c"><use href="#d2"/></svg><svg class="c"><use href="#d3"/></svg>
          <svg class="c"><use href="#d4"/></svg><svg class="c"><use href="#d5"/></svg><svg class="c"><use href="#d6"/></svg>
          <svg class="c"><use href="#d7"/></svg><svg class="c"><use href="#d8"/></svg>
        </div>
      </div>
      <div class="glabel"><span>尺寸</span><i class="cr"></i></div>
    </div>

    <div class="grp g-note">
      <div class="gbody">
        <div class="big w42 ml7"><svg class="bi"><use href="#bigA"/></svg><span>注释</span></div>
        <div class="sg cols4c">
          <svg class="c"><use href="#n1"/></svg><svg class="c"><use href="#n2"/></svg><svg class="c"><use href="#n3"/></svg><svg class="c"><use href="#n4"/></svg><i class="cr sc"></i>
          <svg class="c"><use href="#n5"/></svg><svg class="c"><use href="#n6"/></svg><svg class="c"><use href="#n7"/></svg><svg class="c"><use href="#n8"/></svg><b></b>
          <svg class="c"><use href="#n9"/></svg><svg class="c"><use href="#n10"/></svg><svg class="c"><use href="#n11"/></svg><svg class="c"><use href="#n12"/></svg>
        </div>
      </div>
      <div class="glabel"><span>注释</span><i class="cr"></i></div>
    </div>

    <div class="grp g-sketch">
      <div class="gbody">
        <div class="big w44 ml12"><svg class="bi"><use href="#flag"/></svg><span>完成草图</span></div>
        <div class="skbox">
          <svg class="c"><use href="#s1"/></svg><svg class="c"><use href="#s2"/></svg><svg class="c"><use href="#s3"/></svg>
          <svg class="c"><use href="#s4"/></svg><svg class="c"><use href="#s5"/></svg><svg class="c"><use href="#s6"/></svg>
          <svg class="c"><use href="#s7"/></svg><svg class="c"><use href="#s8"/></svg><svg class="c"><use href="#s9"/></svg>
        </div>
        <div class="skarrows"><i class="cr cr-g cr-u"></i><i class="cr"></i><i class="cr cr-l"></i></div>
        <div class="more ml7"><div class="mobox"><svg class="c"><use href="#mo1"/></svg></div><span>更多</span><i class="cr bc2"></i></div>
      </div>
      <div class="glabel"><span>草图</span><i class="cr"></i></div>
    </div>

    <div class="grp g-table">
      <div class="gbody">
        <div class="tlist">
          <div class="tli"><svg class="tic"><use href="#tb1"/></svg><span>表格注释</span></div>
          <div class="tli"><svg class="tic"><use href="#tb2"/></svg><span>零件明细表</span></div>
        </div>
        <div class="sg cols1">
          <svg class="c"><use href="#tb3"/></svg><svg class="c"><use href="#tb4"/></svg><svg class="c"><use href="#tb5"/></svg>
        </div>
        <div class="more ml7"><div class="mobox"><svg class="c"><use href="#tb6"/></svg></div><span>更多</span><i class="cr bc2"></i></div>
      </div>
      <div class="glabel"><span>表</span><i class="cr"></i></div>
    </div>

    <div class="grp g-edit">
      <div class="gbody">
        <div class="big w44 ml9"><svg class="bi"><use href="#edit"/></svg><span>编辑设置</span></div>
      </div>
    </div>

    <div class="grp g-std">
      <div class="gbody rows ml3">
        <div class="rw">
          <svg class="c"><use href="#u1"/></svg><svg class="c"><use href="#u2"/></svg><svg class="c"><use href="#u3"/></svg><i class="vs"></i><svg class="c"><use href="#u4"/></svg>
        </div>
        <div class="rw">
          <svg class="c"><use href="#u5"/></svg><svg class="c"><use href="#u6"/></svg><svg class="c"><use href="#u7"/></svg><i class="vs"></i><svg class="c"><use href="#u8"/></svg>
        </div>
      </div>
      <div class="glabel gl-st"><span>标准化工具 - G...</span><i class="cr"></i></div>
    </div>

    <div class="grp g-draw">
      <div class="gbody rows ml3">
        <div class="rw">
          <svg class="c"><use href="#t1"/></svg><svg class="c"><use href="#t2"/></svg><svg class="c"><use href="#t3"/></svg><svg class="c"><use href="#t4"/></svg><svg class="c"><use href="#t5"/></svg><i class="vs"></i>
          <svg class="c"><use href="#t6"/></svg><i class="vs"></i>
          <svg class="c"><use href="#t7"/></svg><i class="vs"></i>
          <svg class="c"><use href="#t8"/></svg><svg class="c"><use href="#t9"/></svg><svg class="c"><use href="#t10"/></svg><i class="vs"></i>
          <svg class="c"><use href="#t11"/></svg><svg class="c"><use href="#t12"/></svg><svg class="c"><use href="#t13"/></svg><svg class="c"><use href="#t14"/></svg><svg class="c"><use href="#t15"/></svg><svg class="c"><use href="#t16"/></svg>
        </div>
        <div class="rw r2">
          <svg class="c"><use href="#w1"/></svg><svg class="c"><use href="#w2"/></svg><svg class="c"><use href="#w3"/></svg><svg class="c"><use href="#w4"/></svg><svg class="c"><use href="#w5"/></svg><svg class="c"><use href="#w6"/></svg><svg class="c"><use href="#w7"/></svg><svg class="c"><use href="#w8"/></svg><svg class="c"><use href="#w9"/></svg><svg class="c"><use href="#w10"/></svg><i class="vs"></i>
          <svg class="c"><use href="#w11"/></svg><svg class="c"><use href="#gear"/></svg><i class="vs"></i>
          <svg class="c"><use href="#w13"/></svg>
        </div>
      </div>
      <div class="glabel"><span>制图工具 - GC工具箱</span><i class="cr"></i></div>
    </div>

    <div class="grp g-fast">
      <div class="gbody rows ml3">
        <div class="rw">
          <svg class="c"><use href="#f1"/></svg><i class="vs"></i>
          <svg class="c"><use href="#f2"/></svg><svg class="c"><use href="#f3"/></svg><svg class="c"><use href="#f4"/></svg><svg class="c"><use href="#f5"/></svg><svg class="c"><use href="#f6"/></svg><svg class="c"><use href="#f7"/></svg><svg class="c"><use href="#f8"/></svg><svg class="c"><use href="#f9"/></svg><svg class="c"><use href="#f10"/></svg><svg class="c"><use href="#f11"/></svg><svg class="c"><use href="#f12"/></svg>
        </div>
        <div class="rw">
          <svg class="c"><use href="#h1"/></svg><svg class="c"><use href="#h2"/></svg><i class="vs"></i>
          <svg class="c"><use href="#h3"/></svg><svg class="c"><use href="#h4"/></svg><svg class="c"><use href="#h5"/></svg>
        </div>
      </div>
      <div class="glabel"><span>尺寸快速格式化工具 - GC工具箱</span><i class="cr"></i></div>
    </div>
  </section>

  <section class="selbar">
    <span class="menu">单(<u>M</u>)</span><i class="cr mcr"></i><i class="sb"></i>
    <div class="combo c1"><i class="cr cr-g"></i></div>
    <div class="combo c2"><span>仅在工作部件内</span><i class="cr cr-g"></i></div>
    <svg class="c s0"><use href="#b1"/></svg>
    <svg class="c sred"><use href="#b2"/></svg><i class="cr s-cr"></i>
    <svg class="c"><use href="#b3"/></svg>
    <svg class="c"><use href="#b4"/></svg>
    <svg class="c"><use href="#b5"/></svg><i class="cr s-cr"></i>
    <svg class="c sx"><use href="#b6"/></svg>
    <svg class="c"><use href="#b7"/></svg>
    <svg class="c"><use href="#b8"/></svg>
    <svg class="c"><use href="#b9"/></svg>
    <svg class="c"><use href="#b10"/></svg>
    <svg class="c"><use href="#b11"/></svg>
    <svg class="c"><use href="#b12"/></svg>
    <svg class="c"><use href="#b13"/></svg>
    <svg class="c"><use href="#b14"/></svg>
    <svg class="c"><use href="#b15"/></svg>
    <svg class="c"><use href="#b7"/></svg>
    <svg class="c"><use href="#b16"/></svg>
    <i class="sb sb2"></i>
    <svg class="c"><use href="#v1"/></svg>
    <svg class="c"><use href="#v2"/></svg>
    <svg class="c"><use href="#v3"/></svg><i class="cr s-cr"></i>
    <svg class="c sy"><use href="#v4"/></svg><i class="cr s-cr"></i>
    <i class="sb sb3"></i>
  </section>

  <main class="main">
    <aside class="nav">
      <div class="nav-t"><span>装配导航器</span><i class="maxi"></i></div>
      <div class="tree">
        <div class="thead">
          <div class="th1"><span>描述性部件名</span><i class="sort"></i></div>
          <div class="th2">信息</div>
          <div class="th3">只</div>
        </div>
        <div class="tbody">
          <div class="tr"><div class="nm n-sec"><i class="dotl"></i><svg class="fo"><use href="#folder"/></svg><span>截面</span></div><div class="inf"></div><div class="ro"></div></div>
          <div class="tr"><div class="nm n-root"><i class="minus"></i><svg class="ck"><use href="#chk"/></svg><svg class="cbs"><use href="#cubes"/></svg><b>CZ-HGZZ1-V1.0（顺序：字...</b></div><div class="inf"></div><div class="ro"><svg class="rs"><use href="#rsave"/></svg></div></div>
          <div class="tr"><div class="nm"><i class="cn"></i><svg class="ck"><use href="#chk"/></svg><svg class="cb"><use href="#cube"/></svg><span>7902A5DB</span></div><div class="inf"></div><div class="ro"><i class="ds"></i></div></div>
          <div class="tr"><div class="nm"><i class="cn"></i><svg class="ck"><use href="#chk"/></svg><svg class="cb"><use href="#cube"/></svg><span>7905A5DB</span></div><div class="inf"></div><div class="ro"><i class="ds"></i></div></div>
          <div class="tr"><div class="nm"><i class="cn"></i><svg class="ck"><use href="#chk"/></svg><svg class="cb"><use href="#cube"/></svg><span>CZ-HGZZ001-V1.0</span></div><div class="inf"></div><div class="ro"><i class="ds"></i></div></div>
          <div class="tr"><div class="nm"><i class="cn"></i><svg class="ck"><use href="#chk"/></svg><svg class="cb"><use href="#cube"/></svg><span>CZ-HGZZ002-V1.0</span></div><div class="inf"></div><div class="ro"><i class="ds"></i></div></div>
          <div class="tr"><div class="nm"><i class="cn"></i><svg class="ck"><use href="#chk"/></svg><svg class="cb"><use href="#cube"/></svg><span>CZ-HGZZ003-V1.0</span></div><div class="inf"></div><div class="ro"><i class="ds"></i></div></div>
          <div class="tr"><div class="nm"><i class="cn"></i><svg class="ck"><use href="#chk"/></svg><svg class="cb"><use href="#cube"/></svg><span>CZ-HGZZ004-V1.0</span></div><div class="inf"></div><div class="ro"><i class="ds"></i></div></div>
          <div class="tr"><div class="nm"><i class="cn"></i><svg class="ck"><use href="#chk"/></svg><svg class="cb"><use href="#cube"/></svg><span>CZ-HGZZ005-V1.0</span></div><div class="inf"></div><div class="ro"><i class="ds"></i></div></div>
          <div class="tr"><div class="nm"><i class="cn"></i><svg class="ck"><use href="#chk"/></svg><svg class="cb"><use href="#cube"/></svg><span>CZ-HGZZ006-V1.0</span></div><div class="inf"></div><div class="ro"><i class="ds"></i></div></div>
          <div class="tr"><div class="nm"><i class="cn"></i><svg class="ck"><use href="#chk"/></svg><svg class="cb"><use href="#cube"/></svg><span>CZ-HGZZ007-V1.0</span></div><div class="inf"></div><div class="ro"><i class="ds"></i></div></div>
          <div class="tr"><div class="nm"><i class="cn"></i><svg class="ck"><use href="#chk"/></svg><svg class="cb"><use href="#cube"/></svg><span>CZ-HGZZ008-V1.0</span></div><div class="inf"></div><div class="ro"><i class="ds"></i></div></div>
          <div class="tr"><div class="nm"><i class="cn"></i><svg class="ck"><use href="#chk"/></svg><svg class="cb"><use href="#cube"/></svg><span>CZ-HGZZ009-V1.0</span></div><div class="inf"></div><div class="ro"><i class="ds"></i></div></div>
          <div class="tr"><div class="nm"><i class="cn"></i><svg class="ck"><use href="#chk"/></svg><svg class="cb"><use href="#cube"/></svg><span>CZ-HGZZ010-V1.0</span></div><div class="inf"></div><div class="ro"><i class="ds"></i></div></div>
          <div class="tr"><div class="nm"><i class="cn"></i><svg class="ck"><use href="#chk"/></svg><svg class="cb"><use href="#cube"/></svg><span>CZ-HGZZ011-V1.0</span></div><div class="inf"></div><div class="ro"><i class="ds"></i></div></div>
          <div class="tr"><div class="nm"><i class="cn"></i><svg class="ck"><use href="#chk"/></svg><svg class="cb"><use href="#cube"/></svg><span>CZ-HGZZ012-V1.0</span></div><div class="inf"></div><div class="ro"><i class="ds"></i></div></div>
          <div class="tr"><div class="nm"><i class="cn"></i><svg class="ck"><use href="#chk"/></svg><svg class="cb"><use href="#cube"/></svg><span>DH_31.5_16.3_0.8_1.85 x ...</span></div><div class="inf"></div><div class="ro"><i class="ds"></i></div></div>
          <div class="tr"><div class="nm"><i class="cn"></i><svg class="ck"><use href="#chk"/></svg><svg class="cb"><use href="#cube"/></svg><span>EMH1703D8</span></div><div class="inf"></div><div class="ro"><i class="ds"></i></div></div>
          <div class="tr"><div class="nm"><i class="cn"></i><svg class="ck"><use href="#chk"/></svg><svg class="cb"><use href="#cube"/></svg><span>OXQ40_35</span></div><div class="inf"></div><div class="ro"><i class="ds"></i></div></div>
          <div class="tr"><div class="nm"><i class="cn"></i><svg class="ck"><use href="#chk"/></svg><svg class="cb"><use href="#cube"/></svg><span>OXQ55_50 x 2</span></div><div class="inf"></div><div class="ro"><i class="ds"></i></div></div>
          <div class="tr"><div class="nm"><i class="cn"></i><svg class="ck"><use href="#chk"/></svg><svg class="cb"><use href="#cube"/></svg><span>OXQ60_55</span></div><div class="inf"></div><div class="ro"><i class="ds"></i></div></div>
          <div class="tr"><div class="nm"><i class="cn"></i><svg class="ck"><use href="#chk"/></svg><svg class="cb"><use href="#cube"/></svg><span>PH6M5</span></div><div class="inf"></div><div class="ro"><i class="ds"></i></div></div>
          <div class="tr"><div class="nm"><i class="cn"></i><svg class="ck"><use href="#chk"/></svg><svg class="cb"><use href="#cube"/></svg><span>sca4-12 x 4</span></div><div class="inf"></div><div class="ro"><i class="ds"></i></div></div>
          <div class="tr"><div class="nm"><i class="cn"></i><svg class="ck"><use href="#chk"/></svg><svg class="cb"><use href="#cube"/></svg><span>scc3-4 x 2</span></div><div class="inf"></div><div class="ro"><i class="ds"></i></div></div>
          <div class="tr"><div class="nm"><i class="cn"></i><svg class="ck"><use href="#chk"/></svg><svg class="cb"><use href="#cube"/></svg><span>TH48_4_33</span></div><div class="inf"></div><div class="ro"><i class="ds"></i></div></div>
          <div class="tr"><div class="nm"><i class="cn cn-last"></i><svg class="ck"><use href="#chk"/></svg><svg class="cb"><use href="#cube"/></svg><span>产品弹簧1</span></div><div class="inf"></div><div class="ro"><i class="ds"></i></div></div>
          <div class="tr"><div class="nm"></div><div class="inf"></div><div class="ro"></div></div>
          <div class="tr"><div class="nm"></div><div class="inf"></div><div class="ro"></div></div>
          <div class="tr"><div class="nm"></div><div class="inf"></div><div class="ro"></div></div>
          <div class="tr"><div class="nm"></div><div class="inf"></div><div class="ro"></div></div>
          <div class="tr"><div class="nm"></div><div class="inf"></div><div class="ro"></div></div>
          <div class="tr"><div class="nm"></div><div class="inf"></div><div class="ro"></div></div>
          <div class="tr"><div class="nm"></div><div class="inf"></div><div class="ro"></div></div>
          <div class="tr"><div class="nm"></div><div class="inf"></div><div class="ro"></div></div>
          <div class="tr"><div class="nm"></div><div class="inf"></div><div class="ro"></div></div>
          <div class="tr"><div class="nm"></div><div class="inf"></div><div class="ro"></div></div>
          <div class="tr"><div class="nm"></div><div class="inf"></div><div class="ro"></div></div>
          <div class="tr"><div class="nm"></div><div class="inf"></div><div class="ro"></div></div>
        </div>
        <div class="hbar nav-h"><i class="thumb"></i><i class="ar-r"></i></div>
      </div>
    </aside>

    <div class="canvas">
      <svg class="sheet" viewBox="286 175 1560 838" xmlns="http://www.w3.org/2000/svg">
        <rect x="501" y="185" width="1156" height="818" fill="none" stroke="#8a8a8a" stroke-width="1.300" stroke-dasharray="14 10"/>
        <rect x="542" y="199" width="1101" height="790" fill="none" stroke="#8df08d" stroke-width="1.300"/>
        <path d="M1078 199v13M1490 199v13M1078 975v14M1216 975v14M1353 975v14M1492 975v14M1629 732h14M1629 869h14M1629 400h14M542 400h14M542 732h14" stroke="#5ff25f" stroke-width="1.200"/>
        <rect x="556" y="213" width="1073" height="762" fill="none" stroke="#00f000" stroke-width="2"/>
        <path d="M500 185h29v14h-14v14h-15zM1657 185h-29v14h14v14h15zM500 1003h29v-14h-14v-14h-15zM1657 1003h-29v-14h14v-14h15z" fill="#00ff00"/>
        <rect x="556" y="213" width="61" height="11" fill="none" stroke="#00f000" stroke-width="1.300"/>
        <text class="flip" transform="rotate(180 586.500 218.500)" x="586.500" y="221.500" text-anchor="middle">CZ-HGZZ1-V1.0</text>

        <path class="tb-l" d="M1131 862h498M1131 862v113M1287 862v113M1447 862v113M1359 906v69M1131 906h498M1131 953h316M1287 928h72M1287 965h316M1359 917h88M1359 929h88M1359 941h88M1447 940h182M1403 965v10M1538 965v10"/>
        <path d="M1462 872c30-2 60-1 92-1l2 3-20 1 10 3c20-1 45-1 66-2l1 6-28 1-4 4-30-1-6-4-30 2-30 2-10-3-9 2-5-5 4-3-3-4z" fill="#ee1c25"/>
        <g class="tb-t">
          <text x="1368" y="871" text-anchor="middle">PROJECT NAME:</text>
          <text x="1368" y="893" text-anchor="middle">B-6</text>
          <text x="1323" y="915" text-anchor="middle">MAT'L:</text>
          <text x="1323" y="938" text-anchor="middle">FINISH:</text>
          <text x="1323" y="962" text-anchor="middle">WT:  kg</text>
          <text x="1323" y="973" text-anchor="middle">Q'TY:  pcs</text>
          <text x="1403" y="915" text-anchor="middle">APPD:</text>
          <text x="1403" y="926" text-anchor="middle">CHKD:</text>
          <text x="1403" y="938" text-anchor="middle">DRAW:</text>
          <text x="1403" y="950" text-anchor="middle">TEL:</text>
          <text x="1403" y="962" text-anchor="middle">SCALE: 1:1</text>
          <text x="1381" y="973" text-anchor="middle">SHEET:</text>
          <text x="1425" y="973" text-anchor="middle">OF:</text>
          <text x="1493" y="973" text-anchor="middle">DATE:</text>
          <text x="1583" y="973" text-anchor="middle">Rev:</text>
          <text x="1538" y="915" text-anchor="middle">PART NAME:</text>
          <text x="1538" y="932" text-anchor="middle">箍体夹头装置</text>
          <text x="1538" y="948" text-anchor="middle">DWG NO:</text>
          <text x="1538" y="960" text-anchor="middle">CZ-HGZZ1-V1.0</text>
          <text x="1538" y="895" text-anchor="middle" class="co">Dongguangshi ChuangZhong Automated EquipmentCo.,Ltd</text>
          <text x="1606" y="884" class="co2">司</text>
        </g>
        <text class="alld" x="1210" y="968" text-anchor="middle">ALL DIMENSIONS IN MM</text>
        <path d="M1168 908v44" stroke="#999" stroke-width="1.500"/>
        <circle cx="1168" cy="929" r="15" class="sym"/>
        <circle cx="1168" cy="929" r="11" class="sym" stroke-dasharray="6 2"/>
        <circle cx="1168" cy="929" r="8" class="sym"/>
        <path d="M1146 929h44M1207 929h18M1231 929h12M1249 929h23" stroke="#111" stroke-width="1"/>
        <path class="sym" d="M1220 919l39-3v28l-39-5z"/>
      </svg>

      <table class="parts">
        <colgroup><col class="p1"><col class="p2"><col class="p3"><col class="p4"><col class="p5"><col class="p6"><col class="p7"><col class="p8"></colgroup>
        <tbody>
          <tr class="h18"><td><span>24</span></td><td><span>OXQ60_55</span></td><td><span>O形密封圈</span></td><td><span>1</span></td><td></td><td></td><td><span>0.0</span></td><td></td></tr>
          <tr class="h17"><td><span>23</span></td><td><span>CZ-HGZZ002-V1.0</span></td><td></td><td><span>1</span></td><td></td><td></td><td><span>0.0</span></td><td></td></tr>
          <tr class="h16"><td><span>22</span></td><td><span>CZ-HGZZ006-V1.0</span></td><td></td><td><span>1</span></td><td></td><td></td><td><span>0.0</span></td><td></td></tr>
          <tr class="h17"><td><span>21</span></td><td><span>CZ-HGZZ012-V1.0</span></td><td></td><td><span>1</span></td><td></td><td></td><td><span>0.0</span></td><td></td></tr>
          <tr class="h17"><td><span>20</span></td><td><span>CZ-HGZZ011-V1.0</span></td><td></td><td><span>1</span></td><td></td><td></td><td><span>0.0</span></td><td></td></tr>
          <tr class="h16"><td><span>19</span></td><td><span>PH6M5</span></td><td></td><td><span>1</span></td><td></td><td></td><td><span>0.0</span></td><td></td></tr>
          <tr class="h18"><td><span>18</span></td><td><span>OXQ40_35</span></td><td><span>O形密封圈</span></td><td><span>1</span></td><td></td><td></td><td><span>0.0</span></td><td></td></tr>
          <tr class="h17"><td><span>17</span></td><td><span>SCC3-4</span></td><td></td><td><span>2</span></td><td></td><td></td><td><span>0.0</span></td><td></td></tr>
          <tr class="h17"><td><span>16</span></td><td><span>CZ-HGZZ010-V1.0</span></td><td></td><td><span>1</span></td><td></td><td></td><td><span>0.0</span></td><td></td></tr>
          <tr class="h18"><td><span>15</span></td><td><span>EMH1703D8</span></td><td><span>拉步进电机</span></td><td><span>1</span></td><td></td><td></td><td><span>0.0</span></td><td><span>带编码器</span></td></tr>
          <tr class="h16"><td><span>14</span></td><td><span>7902A5DB</span></td><td></td><td><span>1</span></td><td></td><td></td><td><span>0.0</span></td><td></td></tr>
          <tr class="h17"><td><span>13</span></td><td><span>TH48_4_33</span></td><td><span>0</span></td><td><span>1</span></td><td></td><td><span>0.0</span></td><td><span>0.0</span></td><td><span>0</span></td></tr>
          <tr class="h17"><td><span>12</span></td><td><span>CZ-HGZZ009-V1.0</span></td><td></td><td><span>1</span></td><td></td><td></td><td><span>0.0</span></td><td></td></tr>
          <tr class="h16"><td><span>11</span></td><td><span>CZ-HGZZ004-V1.0</span></td><td></td><td><span>1</span></td><td></td><td></td><td><span>0.0</span></td><td></td></tr>
          <tr class="h17"><td><span>10</span></td><td><span>CZ-HGZZ007-V1.0</span></td><td></td><td><span>1</span></td><td></td><td></td><td><span>0.0</span></td><td></td></tr>
          <tr class="h17"><td><span>9</span></td><td><span>CZ-HGZZ008-V1.0</span></td><td></td><td><span>1</span></td><td></td><td></td><td><span>0.0</span></td><td></td></tr>
          <tr class="h16"><td><span>8</span></td><td><span>7905A5DB</span></td><td><span>0</span></td><td><span>1</span></td><td></td><td><span>0.0</span></td><td><span>0.0</span></td><td><span>0</span></td></tr>
          <tr class="h17"><td><span>7</span></td><td><span>SCA4-12</span></td><td><span>0</span></td><td><span>4</span></td><td></td><td><span>0.0</span></td><td><span>0.0</span></td><td><span>0</span></td></tr>
          <tr class="h18"><td><span>6</span></td><td><span>OXQ55_50</span></td><td><span>O形密封圈</span></td><td><span>2</span></td><td></td><td></td><td><span>0.0</span></td><td></td></tr>
          <tr class="h18"><td><span>5</span></td><td><span>CZ-HGZZ001-V1.0</span></td><td><span>夹头</span></td><td><span>1</span></td><td></td><td></td><td><span>0.0</span></td><td></td></tr>
          <tr class="h16"><td><span>4</span></td><td><span>CZ-HGZZ003-V1.0</span></td><td></td><td><span>1</span></td><td></td><td></td><td><span>0.0</span></td><td></td></tr>
          <tr class="h17"><td><span>3</span></td><td><span>CZ-HGZZ005-V1.0</span></td><td></td><td><span>1</span></td><td></td><td></td><td><span>0.0</span></td><td></td></tr>
          <tr class="h18"><td><span>2</span></td><td><span>产品弹簧1</span></td><td><span>0</span></td><td><span>1</span></td><td></td><td></td><td><span>0.0</span></td><td></td></tr>
          <tr class="h26"><td><span>1</span></td><td><span>DH_31.5_16_3_0.8<br>_1.85</span></td><td><span>碟形弹片</span></td><td><span>14</span></td><td></td><td></td><td><span>0.0</span></td><td></td></tr>
          <tr class="h17 hd"><td rowspan="2"><span>序号</span></td><td rowspan="2"><span>代　　号</span></td><td rowspan="2"><span>名　　称</span></td><td rowspan="2"><span>数量</span></td><td rowspan="2"><span>材　　料</span></td><td><span>单件</span></td><td><span>总计</span></td><td rowspan="2"><span>REMARK</span></td></tr>
          <tr class="h16 hd"><td colspan="2"><span>重 量/kg</span></td></tr>
        </tbody>
      </table>
      <div class="sheetname">图纸页 "A3" 工作</div>
    </div>
  </main>

  <footer class="status">
    <span>表或装配节点然后选择输出行</span>
    <div class="st-r"><svg class="st-f"><use href="#flag"/></svg><svg class="st-w"><use href="#frame"/></svg></div>
  </footer>

  <section class="dlg">
    <div class="dlg-h"><svg class="dh-g"><use href="#tgear"/></svg><span class="dh-t">明细表输出</span><svg class="dh-r"><use href="#reset"/></svg><svg class="dh-x"><use href="#tclose"/></svg></div>

    <div class="sec s-src">
      <div class="sec-h"><span>资源</span><svg class="chev"><use href="#chev"/></svg></div>
      <div class="graybox radios">
        <label class="rad"><i class="rd on"></i>零件明细表</label>
        <label class="rad"><i class="rd"></i>装配节点</label>
      </div>
      <div class="selrow"><svg class="okc"><use href="#okc"/></svg><span>选择明细表 (1)</span><div class="tgt"><svg><use href="#cross"/></svg></div></div>
      <div class="frame f1">
        <div class="tbwrap">
          <div class="tbleft">
            <table class="grid g3">
              <thead><tr><th>序号</th><th>代号</th><th>名称</th><th>数</th></tr></thead>
              <tbody>
                <tr><td></td><td></td><td></td><td></td></tr>
                <tr><td></td><td></td><td></td><td></td></tr>
                <tr><td></td><td></td><td></td><td></td></tr>
              </tbody>
            </table>
            <div class="hbar h1x"><i class="ar-l"></i><i class="thumb"></i><i class="ar-r"></i></div>
          </div>
          <div class="vbar v1x"><i class="ar-u"></i><i class="vthumb"></i><i class="ar-d"></i></div>
        </div>
        <div class="tools">
          <span class="tbtn"><svg><use href="#addf"/></svg></span>
          <span class="tbtn"><svg><use href="#addr"/></svg></span>
          <span class="tbtn"><svg><use href="#addo"/></svg></span>
        </div>
      </div>
    </div>

    <div class="sec s-out">
      <div class="sec-h"><span>输出</span><svg class="chev"><use href="#chev"/></svg></div>
      <div class="frame f2">
        <div class="otbl">
          <div class="oclip">
            <table class="grid g4">
              <thead><tr><th>序号</th><th>代号</th><th>名称</th><th>数</th></tr></thead>
              <tbody>
                <tr><td>1</td><td>DH_31.5_1...</td><td>碟形弹片</td><td></td></tr>
                <tr><td>2</td><td>产品弹簧1</td><td>0</td><td></td></tr>
                <tr><td>3</td><td>CZ-HGZZ0...</td><td></td><td></td></tr>
                <tr><td>4</td><td>CZ-HGZZ0...</td><td></td><td></td></tr>
              </tbody>
            </table>
            <div class="vbar v2x"><i class="ar-u"></i><i class="vthumb"></i><i class="ar-d"></i></div>
          </div>
          <div class="hbar h2x"><i class="ar-l"></i><i class="thumb"></i><i class="ar-r"></i></div>
        </div>
        <div class="obtns">
          <span class="obtn"><svg><use href="#xb"/></svg></span>
          <span class="obtn"><svg><use href="#up"/></svg></span>
          <span class="obtn"><svg><use href="#down"/></svg></span>
        </div>
      </div>
      <div class="graybox sub s-o2">
        <div class="sub-h"><span>输出</span><svg class="chev2"><use href="#chev"/></svg></div>
        <div class="pathrow"><div class="pathin">C:\Users\ADMINI~1\AppData\Local\Temp\</div><span class="pathbtn"><svg><use href="#openf"/></svg></span></div>
      </div>
    </div>

    <div class="sec s-set">
      <div class="sec-h"><span>设置</span><svg class="chev"><use href="#chev"/></svg></div>
      <div class="fmt"><span>输出格式</span><div class="fmtc"><span>组件明细表</span><i class="cr"></i></div></div>
      <div class="graybox sub s-mark">
        <div class="sub-h"><span>标注</span><svg class="chev2"><use href="#chev"/></svg></div>
        <div class="whbox radios">
          <label class="rad"><i class="rd on"></i>按原编号输出</label>
          <label class="rad"><i class="rd"></i>自动编号</label>
        </div>
      </div>
      <label class="openafter"><i class="cbx"></i>输出后打开文件</label>
    </div>

    <div class="sec s-pre">
      <div class="sec-h"><span>预览</span><svg class="chev"><use href="#chev"/></svg></div>
      <div class="prerow"><span>预览输出结果</span><span class="tbtn"><svg><use href="#mag"/></svg></span></div>
    </div>

    <div class="dlg-f">
      <button class="btn">确定</button>
      <button class="btn pri">应用</button>
      <button class="btn">取消</button>
    </div>
  </section>

  <div class="wm">
    <svg class="wm-i" viewBox="0 0 72 82" xmlns="http://www.w3.org/2000/svg">
      <path d="M36 0 72 20v42L36 82 0 62V20z" fill="#7cc4ee" opacity=".36"/>
      <path d="M36 18 57 30v24L36 66 15 54V30z" fill="#d2d3d5" opacity=".55"/>
      <path d="M36 22 54 32 36 42 18 32z" fill="#a7d4ee" opacity=".65"/>
      <path d="M18 32l18 10v22L18 54z" fill="#86c4e8" opacity=".7"/>
      <path d="M54 32 36 42v22l18-10z" fill="#63b0dc" opacity=".75"/>
      <path d="M0 20v42l36 20V64L16 52V30z" fill="#58b4ec" opacity=".5"/>
    </svg>
    <div class="wm-t"><div class="wm-big">3D世界网</div><div class="wm-sm">WWW.3DSJW.COM</div></div>
  </div>
</div>
</body>
</html>
```

FILE: styles.css
```css
*{box-sizing:border-box}
html,body{margin:0;padding:0;height:100%;overflow:hidden;background:#fff}
body{font:12px/1.2 "Open Sans","Noto Sans CJK SC",sans-serif;color:#222}
i,b{display:block;font-style:normal}
.defs{display:block;width:0;height:0}
.sans{font-family:"Liberation Sans",sans-serif}
.serif{font-family:"Liberation Serif",serif}
.app{position:relative;width:1846px;height:1036px;overflow:hidden;display:flex;flex-direction:column;background:#fff}

/* caret */
.cr{width:0;height:0;border-left:3px solid transparent;border-right:3px solid transparent;border-top:4px solid #111;flex:none}
.cr-g{border-top-color:#999}

/* title bar */
.titlebar{height:21px;display:flex;align-items:center;padding:0 0 5px 3px;flex:none}
.q{width:15px;height:15px;flex:none}
.q+.q{margin-left:8px}
.qs{width:1px;height:17px;background:#ddd;margin:0 7px;flex:none}
.qs-t{margin:0 6px 0 -1px}
.q-cr{margin:0 6px;transform:scale(.9)}
.qt{margin-left:3px;font-size:11px;white-space:nowrap}
.titlebar .q2{margin-left:7px}
.qt2{margin-left:6px}
.q-cr2{width:6px;height:5px;border-top:1px solid #333;border-left:3px solid transparent;border-right:3px solid transparent;border-bottom:3px solid transparent;margin-left:-2px}
.apptitle{margin-left:546px;font-size:13.300px;white-space:nowrap;color:#222}
.siemens{margin-left:auto;font:700 13px "Liberation Sans",sans-serif;letter-spacing:.5px;color:#099;margin-right:25px}
.wmin{width:8px;height:2px;background:#333;margin-top:13px;margin-right:9px;flex:none}
.wres{width:11px;height:11px;border:1.500px solid #333;margin-right:10px;flex:none;box-shadow:2px -2px 0 -1px #fff,3px -3px 0 -1px #333}

/* tabs */
.tabs{height:28px;background:#d9d9d9;display:flex;align-items:flex-end;flex:none}
.tab{height:28px;line-height:27px;padding:0 13px;font-size:13px;color:#222;white-space:nowrap}
.tab.file{width:32px;padding:0;background:#56a0b9;color:#fff;margin-right:2px;text-align:center}
.tab.active{height:27px;width:52px;background:#fff;color:#0e7a9c;text-align:center}
.tab-d{padding:0 22px 0 9px}
.tabs-r{margin-left:auto;display:flex;align-items:center;height:28px}
.find{width:126px;height:19px;background:#fff;border:1px solid #aaa;display:flex;align-items:center;justify-content:space-between;padding:0 2px;color:#aaa;font-size:12px;margin-right:11px}
.find svg{width:15px;height:15px}
.tr-i{width:17px;height:17px;margin-right:9px;flex:none}
.learn{font-size:12px;margin-left:-7px;margin-right:10px;white-space:nowrap}
.tabs-r .wmin{margin-top:11px}

/* ribbon */
.ribbon{height:94px;flex:none;display:flex;padding-top:5px;border-bottom:1px solid #ddd;overflow:hidden}
.grp{height:84px;border-right:1px solid #ddd;flex:none;display:flex;flex-direction:column}
.g0{width:24px}.g-view{width:245px}.g-dim{width:130px}.g-note{width:167px}.g-sketch{width:202px}.g-table{width:174px}.g-edit{width:61px}.g-std{width:104px}.g-draw{width:399px}.g-fast{width:287px}
.gbody{height:72px;display:flex;align-items:flex-start;flex:none}
.glabel{height:14px;display:flex;align-items:center;justify-content:center;color:#0e7a9c;font-size:11px;line-height:14px;position:relative;white-space:nowrap;padding-right:18px}
.glabel .cr{position:absolute;right:6px;top:5px}
.gl-st{justify-content:flex-start;padding:0 0 0 1px}
.cut{margin-top:37px;width:16px;font-size:11px;line-height:14px;white-space:nowrap;direction:rtl;overflow:hidden}
.big{display:flex;flex-direction:column;align-items:center;font-size:11px;line-height:14px;white-space:nowrap;flex:none}
.bi{width:32px;height:36px;margin-bottom:1px;flex:none}
.bc{margin-top:5px}
.w66{width:66px}.w44{width:44px}.w42{width:42px}
.ml12{margin-left:12px}.ml9{margin-left:9px}.ml8{margin-left:8px}.ml7{margin-left:7px}.ml6{margin-left:6px}.ml4{margin-left:4px}.ml3{margin-left:3px}
.c{width:20px;height:20px;flex:none;display:block}
.sg{display:grid;grid-auto-rows:20px;row-gap:2px;margin-top:-2px;justify-items:center;flex:none}
.cols1{grid-template-columns:24px}
.cols2{grid-template-columns:25px 25px}
.cols3{grid-template-columns:25px 25px 25px}
.cols4c{grid-template-columns:25px 25px 25px 25px 18px}
.sc{align-self:center}
.skbox{margin-left:12px;width:69px;height:65px;border:1px solid #ddd;display:grid;grid-template-columns:repeat(3,23px);grid-auto-rows:20px;row-gap:1.500px;justify-items:center;flex:none}
.skarrows{width:14px;margin-left:1px;display:flex;flex-direction:column;align-items:center;gap:18px;padding-top:8px;flex:none}
.cr-u{transform:rotate(180deg)}
.cr-l{box-shadow:0 -2px 0 -1px #111}
.more{width:37px;display:flex;flex-direction:column;align-items:center;font-size:11px;line-height:14px;flex:none}
.mobox{width:37px;height:35px;margin-top:-1px;margin-bottom:3px;border:1px solid #ddd;border-radius:3px;display:flex;align-items:center;justify-content:center}
.bc2{margin-top:5px}
.tlist{margin-left:12px;width:88px;margin-top:4px;display:flex;flex-direction:column;gap:9px;flex:none}
.tli{display:flex;align-items:center;height:24px;gap:5px;font-size:11px;white-space:nowrap}
.tic{width:22px;height:24px;flex:none}
.rows{display:flex;flex-direction:column;gap:9px;padding-top:6px;align-items:flex-start}
.rw{display:flex;height:20px}
.rw .c{margin:0 1.650px}
.r2 .c{margin:0 1.500px}
.vs{width:5px;height:20px;flex:none;background:linear-gradient(#ddd,#ddd) center/1px 100% no-repeat}

/* selection bar */
.selbar{height:32px;display:flex;align-items:center;border-bottom:2px solid #9a9a9a;flex:none;padding-top:1px}
.menu{font-size:12px;margin-left:-5px;white-space:nowrap}
.mcr{margin-left:3px}
.sb{width:1px;height:26px;background:#ddd;margin-left:6px;flex:none}
.combo{height:20px;border:1px solid #aaa;display:flex;align-items:center;justify-content:space-between;padding:0 5px 0 2px;color:#aaa;font-size:12px;white-space:nowrap;flex:none}
.c1{width:133px;margin-left:9px;justify-content:flex-end}
.c2{width:140px;margin-left:9px}
.selbar .c{width:18px;height:18px;margin:0 3.400px}
.selbar .s0{margin-left:6px}
.sred{outline:1.500px solid #c33;outline-offset:-1px}
.s-cr{margin:0 1px}
.selbar .sx{margin-left:9px}
.sb2{margin-left:6px;margin-right:11px}
.selbar .sy{margin-left:7px}
.sb3{margin-left:8px}

/* main */
.main{flex:1;display:flex;min-height:0;position:relative}
.nav{width:285px;flex:none;background:#fff;position:relative}
.nav-t{height:28px;display:flex;align-items:center;justify-content:space-between;padding:2px 16px 0 0;font-size:12px}
.nav-t span{margin-left:-7px;white-space:nowrap}
.maxi{width:12px;height:10px;border:1px solid #111;border-top-width:2px}
.tree{width:276px;height:803px;border:1px solid #ddd;border-left:none;border-bottom:4px solid #c8c8c8;display:flex;flex-direction:column;background:#fff}
.thead{height:22px;flex:none;background:#f0f0f0;display:flex;border-bottom:1px solid #ccc;overflow:hidden;padding-top:2px}
.th1{width:220px;display:flex;align-items:center;flex:none;border-right:1px solid #d4d4d4;white-space:nowrap}
.th1 span{margin-left:-4px}
.sort{width:0;height:0;border-left:5px solid transparent;border-right:5px solid transparent;border-bottom:5px solid #111;margin-left:19px}
.th2{width:37px;text-align:center;line-height:19px;flex:none;border-right:1px solid #d4d4d4}
.th3{flex:none;padding-left:6px;line-height:19px;width:18px;overflow:hidden}
.tbody{height:758px;overflow:hidden;flex:none}
.tr{height:20px;display:flex;border-bottom:1px solid #ebebeb}
.tr:nth-child(even){background:#fafafa}
.nm{width:221px;flex:none;display:flex;align-items:center;padding-left:20px;border-right:1px solid #000;font-size:12.600px;white-space:nowrap;overflow:hidden}
.inf{width:36px;flex:none;border-right:1px solid #ebebeb}
.ro{width:18px;flex:none;padding-left:6px;display:flex;align-items:center;overflow:hidden}
.cn{width:9px;height:20px;flex:none;border-left:1px dotted #888;background:linear-gradient(90deg,#888 50%,transparent 50%) 0 9px/2px 1px repeat-x}
.cn-last{height:10px;margin-bottom:10px}
.ck{width:12px;height:12px;margin-left:2px;flex:none}
.cb{width:13px;height:13px;margin:0 4px;flex:none}
.ds{width:13px;height:12px;border:1px dashed #222;flex:none}
.rs{width:14px;height:14px;flex:none}
.n-sec{padding-left:0;font-size:12px}
.dotl{width:10px;height:1px;flex:none;background:linear-gradient(90deg,#888 50%,transparent 50%) 0 0/2px 1px repeat-x}
.fo{width:16px;height:14px;margin-right:3px;flex:none}
.n-root{padding-left:0}
.minus{width:5px;height:5px;flex:none;border:1px solid #999;border-left:none;margin-right:7px}
.n-root .ck{margin-left:0}
.cbs{width:16px;height:16px;margin:0 3px 0 2px;flex:none}
.n-root b{font-weight:700;font-size:12.600px}
.hbar{background:#efefef;position:relative;flex:none}
.thumb{height:15px;border:1px solid #999;border-radius:2px;background:linear-gradient(#f4f4f4,#e8e8e8 55%,#b8b8b8);position:absolute;top:0}
.thumb::after{content:"";position:absolute;left:50%;top:4px;width:8px;height:6px;margin-left:-4px;background:repeating-linear-gradient(90deg,#555 0 1px,transparent 1px 2px)}
.ar-r,.ar-l,.ar-u,.ar-d{position:absolute;width:0;height:0}
.ar-r{border-top:4px solid transparent;border-bottom:4px solid transparent;border-left:4px solid #333;right:8px;top:4px}
.ar-l{border-top:4px solid transparent;border-bottom:4px solid transparent;border-right:4px solid #333;left:7px;top:4px}
.ar-u{border-left:4px solid transparent;border-right:4px solid transparent;border-bottom:4px solid #333;left:4px;top:6px}
.ar-d{border-left:4px solid transparent;border-right:4px solid transparent;border-top:4px solid #333;left:4px;bottom:6px}
.nav-h{height:16px;margin-top:1px}
.nav-h .thumb{left:9px;width:149px}

/* canvas */
.canvas{flex:1;position:relative;background:#d2d3d5;border-left:1px solid #999;overflow:hidden}
.sheet{position:absolute;left:0;top:0;width:1560px;height:838px}
.flip{font:8px "Liberation Mono",monospace;fill:#b5b58e}
.tb-l{fill:none;stroke:#3d66d8;stroke-width:1.600}
.tb-t text{font:8.200px "Liberation Sans","Noto Sans CJK SC",sans-serif;fill:#777}
.tb-t .co{font-size:6.500px;fill:#888}
.tb-t .co2{font-size:11px;fill:#444}
.alld{font:11.200px "Liberation Sans",sans-serif;fill:#111}
.sym{fill:none;stroke:#222;stroke-width:1}
.parts{position:absolute;left:850px;top:237px;width:416px;border-collapse:collapse;table-layout:fixed}
.p1{width:36px}.p2{width:69px}.p3{width:69px}.p4{width:43px}.p5{width:69px}.p6{width:28px}.p7{width:33px}.p8{width:69px}
.parts td{padding:0;border:1px solid #a99f25;text-align:center;font:6.700px/7px "Liberation Mono","Noto Sans CJK SC",monospace;color:#aead85;white-space:nowrap;overflow:hidden}
.parts td:nth-child(-n+2){border-left-color:#b3ae78;border-right-color:#b3ae78}
.parts td span{display:inline-block;transform:scaleY(1.750)}
.h16 td{height:16px}.h17 td{height:17px}.h18 td{height:18px}.h26 td{height:26px}
.hd td{letter-spacing:.6px}
.parts .hd td span{transform:scaleY(1.300)}
.sheetname{position:absolute;left:7px;top:819px;color:#f0a25e;font-size:13px;white-space:nowrap}

/* status */
.status{height:23px;flex:none;border-top:1px solid #aaa;border-bottom:1px solid #0f2a45;display:flex;align-items:center;justify-content:space-between;font-size:11px;color:#222;font-weight:500;background:#fff;padding-bottom:2px}
.status>span{margin-left:-2px;white-space:nowrap}
.st-r{display:flex;gap:5px;margin-right:31px}
.st-f{width:15px;height:15px}
.st-w{width:16px;height:16px}

/* dialog */
.dlg{position:absolute;left:665px;top:175px;width:327px;height:838px;background:#f0f0f0;display:flex;flex-direction:column;z-index:2}
.dlg-h{height:24px;background:#56a0b9;display:flex;align-items:center;color:#fff;flex:none;padding-left:7px}
.dh-g{width:15px;height:15px;flex:none}
.dh-t{margin-left:10px;font-size:12.500px}
.dh-r{width:14px;height:14px;margin-left:auto;flex:none;position:relative;left:2px}
.dh-x{width:14px;height:14px;margin:0 8px 0 9px;flex:none}
.sec{margin:4px 6px 0 5px;background:#fff;border-bottom:2px solid #d4d4d4;flex:none;padding:0 9px}
.s-src{height:280px}.s-out{height:226px}.s-set{height:182px}.s-pre{height:62px}
.sec-h{height:26px;display:flex;align-items:center;justify-content:space-between;color:#176f93;font-size:14px;margin:0 -9px;padding:0 6px 0 7px}
.chev{width:12px;height:8px}
.graybox{background:#eee;border:1px solid #ddd}
.radios{display:flex;flex-direction:column}
.s-src .radios{margin-top:5px;height:54px;padding:5px 0 0 7px;gap:3px}
.rad{display:flex;align-items:center;height:20px;font-size:12px;gap:6px}
.rd{width:12px;height:12px;border-radius:50%;background:radial-gradient(#eee 35%,#d8d8d8 60%,#fff);border:1px solid #999;flex:none;margin-left:-2px}
.rd.on{background:radial-gradient(#0e6ea0 38%,#cfe0ec 48%,#eee 70%)}
.selrow{display:flex;align-items:center;height:32px;margin-top:2px;padding-left:2px}
.okc{width:12px;height:11px;flex:none;margin-left:0;margin-right:6px}
.tgt{margin-left:auto;width:32px;height:32px;background:#fff;border:1px solid #aaa;display:flex;align-items:center;justify-content:center}
.tgt svg{width:20px;height:20px}
.frame{border:1px solid #ddd;background:#fff;margin-top:2px}
.f1{height:151px;padding:2px}
.tbwrap{height:106px;border:1px solid #ddd;display:flex;padding:4px 2px 2px;background:#fff}
.tbleft{width:267px;flex:none;position:relative}
.grid{border-collapse:collapse;table-layout:fixed;font-size:12px}
.grid th{height:20px;font-weight:400;background:#f0f0f0;border-right:1px solid #d4d4d4;border-bottom:1px solid #ccc;text-align:left;padding:0 7px;white-space:nowrap;overflow:hidden}
.grid td{height:20px;padding:0 5px;border-right:1px solid #efefef;border-bottom:1px solid #efefef;white-space:nowrap;overflow:hidden}
.grid tbody tr:nth-child(even) td{background:#fafafa}
.g3{width:265px}
.g3 th:nth-child(1),.g3 th:nth-child(2),.g3 th:nth-child(3){width:80px}
.h1x{height:17px;margin-top:-1px;width:265px}
.h1x .thumb{left:19px;width:89px}
.vbar{background:#efefef;position:relative;flex:none}
.v1x{width:15px;margin:-2px 0 0 3px}
.vthumb{position:absolute;left:0;width:15px;border:1px solid #999;border-radius:2px;background:linear-gradient(90deg,#f4f4f4,#ddd 60%,#bbb)}
.v1x .vthumb{top:16px;height:66px}
.vthumb::after{content:"";position:absolute;left:4px;top:50%;width:6px;height:7px;margin-top:-3px;background:repeating-linear-gradient(#555 0 1px,transparent 1px 2px)}
.v2x .vthumb::after{display:none}
.tools{height:34px;border:1px solid #ddd;margin-top:3px;padding:2px 4px;display:flex;gap:4px}
.tbtn{width:24px;height:24px;border:1px solid #aaa;background:#fff;display:flex;align-items:center;justify-content:center;flex:none}
.tbtn svg{width:18px;height:18px}
.f2{height:122px;margin-top:4px;padding:6px 4px 0 3px;display:flex}
.otbl{width:262px;flex:none;position:relative}
.oclip{height:93px;overflow:hidden;position:relative}
.g4{width:262px}
.g4 th:nth-child(1){width:81px}
.g4 th:nth-child(2){width:80px}
.g4 th:nth-child(3){width:79px}
.g4 td{padding:0 4px}
.g4 th{height:21px}
.v2x{position:absolute;right:0;top:21px;width:17px;height:72px}
.v2x .vthumb{top:18px;height:15px;left:1px}
.h2x{height:15px}
.h2x .thumb{left:19px;width:76px}
.h2x .ar-r{right:23px}
.obtns{margin-left:3px;display:flex;flex-direction:column;gap:2px;margin-top:-2px}
.obtn{width:24px;height:24px;border:1px solid #ccc;background:#fff;display:flex;align-items:center;justify-content:center}
.obtn svg{width:16px;height:16px}
.sub{margin-top:3px}
.s-o2{height:63px}
.sub-h{height:24px;display:flex;align-items:center;justify-content:space-between;color:#176f93;font-size:12px;padding:0 7px 0 8px}
.chev2{width:10px;height:7px}
.pathrow{display:flex;align-items:center;padding:5px 0 0 8px;gap:4px}
.pathin{width:252px;height:23px;background:#fff;border:1px solid #aaa;font-size:12.600px;line-height:21px;padding-left:4px;white-space:nowrap;overflow:hidden}
.pathbtn{width:24px;height:23px;border:1px solid #aaa;background:#f4f4f4;display:flex;align-items:center;justify-content:center}
.pathbtn svg{width:18px;height:18px}
.fmt{display:flex;align-items:center;justify-content:space-between;height:25px;margin-top:5px}
.fmtc{width:141px;height:25px;border:1px solid #aaa;background:#fff;display:flex;align-items:center;justify-content:space-between;padding:0 6px 0 4px}
.s-mark{margin-top:1px;height:94px}
.whbox{height:55px;margin:5px 8px 0;background:#fff;border:1px solid #d4d4de;padding:6px 0 0 5px;gap:3px}
.openafter{display:flex;align-items:center;gap:6px;margin-top:7px;height:13px}
.cbx{width:13px;height:13px;border:1px solid #888;background:linear-gradient(135deg,#ddd,#fff);flex:none}
.prerow{display:flex;justify-content:space-between;align-items:center;margin-top:4px;height:24px}
.dlg-f{margin-top:12px;display:flex;justify-content:flex-end;gap:5px;padding-right:16px}
.btn{width:54px;height:25px;background:#dcdcdc;border:1px solid #aaa;font:12.500px "Open Sans","Noto Sans CJK SC",sans-serif;color:#222;padding:0}
.btn.pri{background:#73b1c8;color:#fff;border-color:#73b1c8}

/* watermark */
.wm{position:absolute;left:1563px;top:942px;display:flex;z-index:3;pointer-events:none}
.wm-i{width:72px;height:82px;flex:none}
.wm-t{margin:9px 0 0 5px;color:#fff;opacity:.5}
.wm-big{font:700 43px/48px "Open Sans","Noto Sans CJK SC",sans-serif;white-space:nowrap}
.wm-sm{font:700 15px/16px "Liberation Sans",sans-serif;letter-spacing:3.500px;white-space:nowrap}
```
